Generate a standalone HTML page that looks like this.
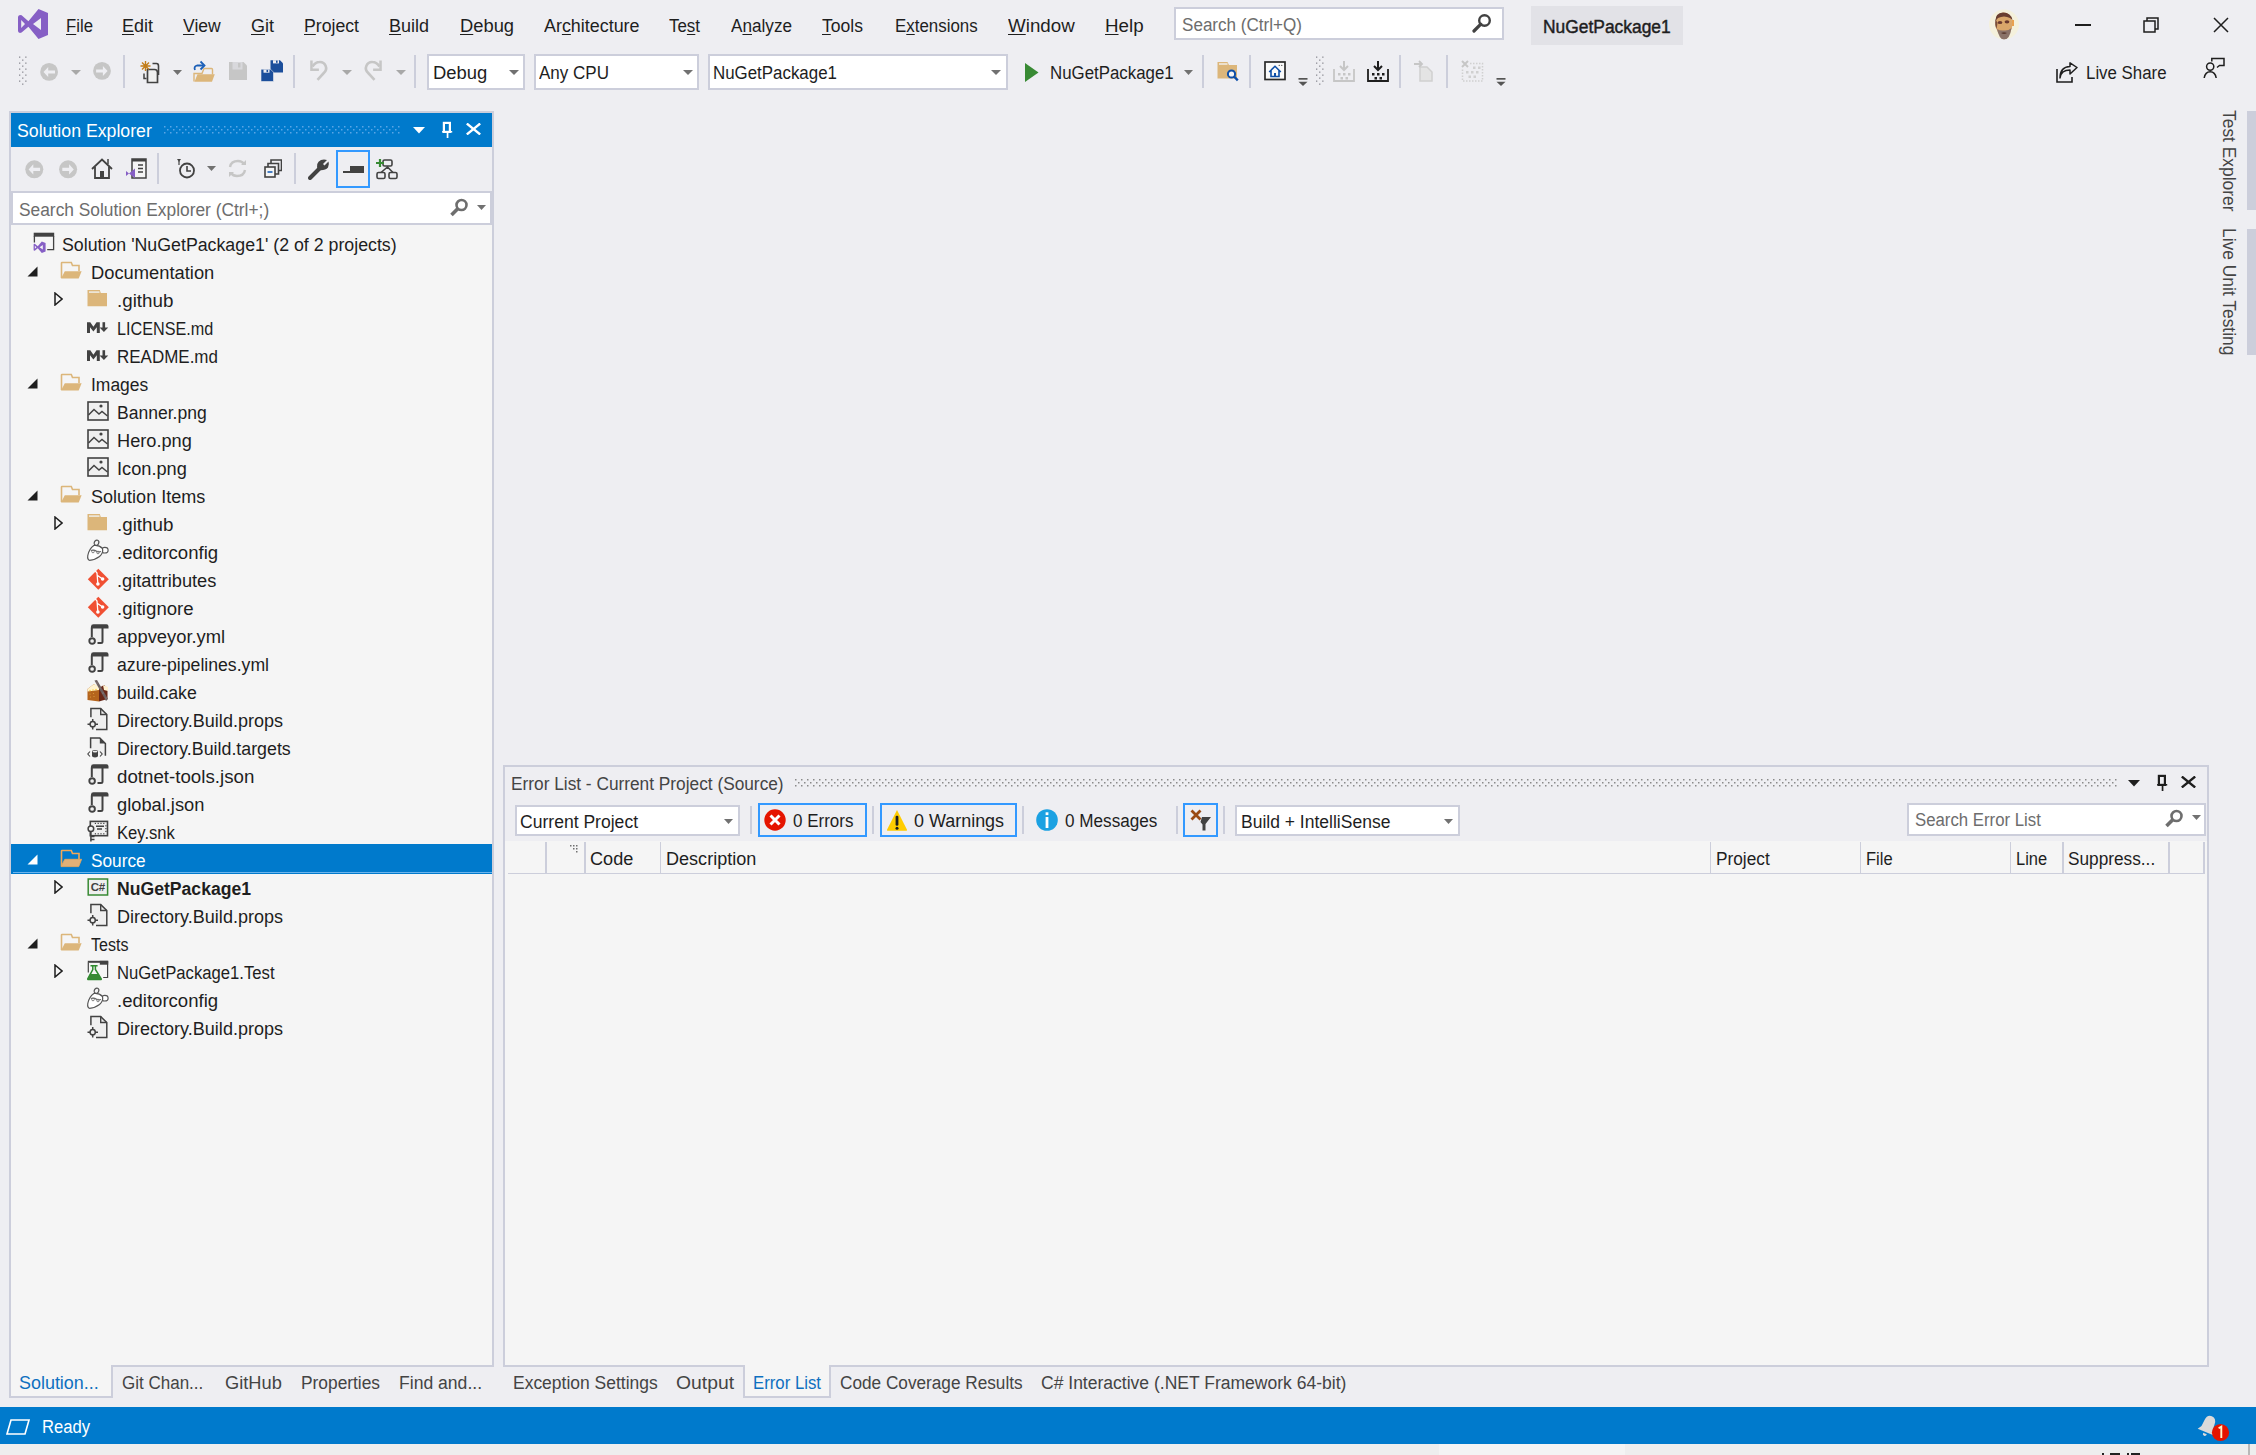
<!DOCTYPE html><html><head><meta charset="utf-8"><style>
html,body{margin:0;padding:0;}
body{width:2256px;height:1455px;overflow:hidden;position:relative;background:#EEEEF2;font-family:"Liberation Sans",sans-serif;font-size:18px;color:#1E1E1E;}
.a{position:absolute;}
.t{position:absolute;white-space:pre;line-height:20px;transform:scaleX(.967);transform-origin:0 0;}
u{text-decoration:underline;text-decoration-thickness:1.3px;text-underline-offset:2px;}
</style></head><body>

<svg class="a" style="left:18px;top:9px;" width="30" height="30" viewBox="0 0 30 30"><path fill="#865FC5" fill-rule="evenodd" d="M0,8 Q0,6.3 2,6 L3.6,6.3 L10.4,12.3 L20.5,0 L30,4 L30,26 L20.5,30 L10.4,17.7 L3.6,23.5 L2,24 Q0,23.7 0,22 Z M3.2,11 L7,15 L3.2,19 Z M23,9 L15,15 L23,21 Z"/></svg>
<div class="t" id="t0" style="left:66px;top:16px;transform:scaleX(0.9286);"><u>F</u>ile</div>
<div class="t" id="t1" style="left:122px;top:16px;transform:scaleX(1.0000);"><u>E</u>dit</div>
<div class="t" id="t2" style="left:183px;top:16px;transform:scaleX(0.9744);"><u>V</u>iew</div>
<div class="t" id="t3" style="left:251px;top:16px;transform:scaleX(1.0000);"><u>G</u>it</div>
<div class="t" id="t4" style="left:304px;top:16px;transform:scaleX(0.9821);"><u>P</u>roject</div>
<div class="t" id="t5" style="left:389px;top:16px;transform:scaleX(1.0000);"><u>B</u>uild</div>
<div class="t" id="t6" style="left:460px;top:16px;transform:scaleX(1.0192);"><u>D</u>ebug</div>
<div class="t" id="t7" style="left:544px;top:16px;transform:scaleX(0.9947);">Ar<u>c</u>hitecture</div>
<div class="t" id="t8" style="left:669px;top:16px;transform:scaleX(0.9394);">Te<u>s</u>t</div>
<div class="t" id="t9" style="left:731px;top:16px;transform:scaleX(0.9524);">A<u>n</u>alyze</div>
<div class="t" id="t10" style="left:822px;top:16px;transform:scaleX(0.9762);"><u>T</u>ools</div>
<div class="t" id="t11" style="left:895px;top:16px;transform:scaleX(0.9386);">E<u>x</u>tensions</div>
<div class="t" id="t12" style="left:1008px;top:16px;transform:scaleX(1.0422);"><u>W</u>indow</div>
<div class="t" id="t13" style="left:1105px;top:16px;transform:scaleX(1.0417);"><u>H</u>elp</div>
<div class="a" style="left:1174px;top:7px;width:330px;height:33px;background:#FFFFFF;box-sizing:border-box;border:2px solid #CCCEDB;"></div>
<div class="t" id="t14" style="left:1182px;top:15px;color:#6D6D6D;transform:scaleX(0.9484);">Search (Ctrl+Q)</div>
<svg class="a" style="left:1472px;top:13px;" width="20" height="20" viewBox="0 0 20 20"><circle cx="12.5" cy="7.5" r="5.3" fill="none" stroke="#424242" stroke-width="2.4"/><path d="M8.8,11.2 L2,18" stroke="#424242" stroke-width="3.2" stroke-linecap="round"/></svg>
<div class="a" style="left:1531px;top:6px;width:152px;height:39px;background:#E2E2E7;"></div>
<div class="t" id="t15" style="left:1543px;top:17px;transform:scaleX(0.9667);-webkit-text-stroke:0.45px #1E1E1E;">NuGetPackage1</div>
<svg class="a" style="left:1989px;top:9px;" width="30" height="31" viewBox="0 0 30 31"><defs><clipPath id="avc"><circle cx="15" cy="15.5" r="15"/></clipPath></defs><g clip-path="url(#avc)"><rect width="30" height="31" fill="#F4F0DC"/><ellipse cx="15" cy="15" rx="8.5" ry="11.5" fill="#D9A66A"/><path d="M6.5,12 Q6,4 14,3.5 Q22,3.5 23.5,11 L21,9 Q15,6 9,9 Z" fill="#6A3E30"/><path d="M6.5,10 Q5.5,16 7.5,20 L8.5,14 Z" fill="#7A4E3A"/><ellipse cx="11" cy="13.5" rx="2.4" ry="1.6" fill="#6A3A2E"/><ellipse cx="18" cy="12.8" rx="2.4" ry="1.6" fill="#6A3A2E"/><path d="M8,20 Q10,30 15,31 Q21,30 22.5,19 Q19,22 15,21.5 Q11,22 8,20 Z" fill="#8A7268"/><path d="M12,24 Q15,22.5 18,24 Q15,26 12,24 Z" fill="#5A3A30"/><rect x="23" y="11" width="2" height="6" fill="#E8A050"/></g></svg>
<div class="a" style="left:2075px;top:24px;width:16px;height:1.5px;background:#1E1E1E;"></div>
<svg class="a" style="left:2143px;top:17px;" width="17" height="16" viewBox="0 0 17 16"><rect x="1" y="4" width="11" height="11" fill="none" stroke="#1E1E1E" stroke-width="1.5"/><path d="M4,4 V1 H15 V12 H12" fill="none" stroke="#1E1E1E" stroke-width="1.5"/></svg>
<svg class="a" style="left:2213px;top:17px;" width="16" height="16" viewBox="0 0 16 16"><path d="M1,1 L15,15 M15,1 L1,15" stroke="#1E1E1E" stroke-width="1.5"/></svg>
<svg class="a" style="left:19px;top:56px;" width="8" height="29" viewBox="0 0 8 29"><g fill="#8C8C94"><rect x="0" y="0.5" width="1.3" height="1.3"/><rect x="6.2" y="0.5" width="1.3" height="1.3"/><rect x="3.1" y="3.5" width="1.3" height="1.3"/><rect x="0" y="6.5" width="1.3" height="1.3"/><rect x="6.2" y="6.5" width="1.3" height="1.3"/><rect x="3.1" y="9.5" width="1.3" height="1.3"/><rect x="0" y="12.5" width="1.3" height="1.3"/><rect x="6.2" y="12.5" width="1.3" height="1.3"/><rect x="3.1" y="15.5" width="1.3" height="1.3"/><rect x="0" y="18.5" width="1.3" height="1.3"/><rect x="6.2" y="18.5" width="1.3" height="1.3"/><rect x="3.1" y="21.5" width="1.3" height="1.3"/><rect x="0" y="24.5" width="1.3" height="1.3"/><rect x="6.2" y="24.5" width="1.3" height="1.3"/><rect x="3.1" y="27.5" width="1.3" height="1.3"/></g></svg>
<svg class="a" style="left:40px;top:62px;" width="19" height="19" viewBox="0 0 19 19"><circle cx="9.1" cy="9.9" r="8.9" fill="#C6C6C6"/><path d="M3.5,10 L8.2,4.9 V8.4 H15 V11.6 H8.2 V15.1 Z" fill="#EEEEF2"/></svg>
<svg class="a" style="left:71px;top:70px;" width="10" height="5" viewBox="0 0 10 5"><path d="M0,0 H10 L5.0,5 Z" fill="#A8A8A8"/></svg>
<svg class="a" style="left:93px;top:61px;" width="19" height="19" viewBox="0 0 19 19"><circle cx="9" cy="9.9" r="8.9" fill="#C6C6C6"/><path d="M14.6,10 L9.9,4.9 V8.4 H3.1 V11.6 H9.9 V15.1 Z" fill="#EEEEF2"/></svg>
<div class="a" style="left:123px;top:55px;width:2px;height:33px;background:#CCCEDB;"></div>
<svg class="a" style="left:139px;top:60px;" width="22" height="24" viewBox="0 0 22 24"><path d="M13.5,3.5 H17.5 Q19.5,3.5 19.5,6 V15" fill="none" stroke="#424242" stroke-width="1.6"/><path d="M8.5,9.5 H15.5 Q18.5,9.5 18.5,12.5 V22.5 H8.5 Z" fill="#F0F0F0" stroke="#424242" stroke-width="1.7"/><path d="M5,13.5 V18.5 H7.5" fill="none" stroke="#424242" stroke-width="1.5"/><path d="M6.5,1 V11 M1.5,6 H11.5 M3,2.5 L10,9.5 M10,2.5 L3,9.5" stroke="#C27D1A" stroke-width="1.4"/><circle cx="6.5" cy="6" r="1.6" fill="#C27D1A"/></svg>
<svg class="a" style="left:173px;top:70px;" width="9" height="5" viewBox="0 0 9 5"><path d="M0,0 H9 L4.5,5 Z" fill="#717171"/></svg>
<svg class="a" style="left:193px;top:60px;" width="22" height="23" viewBox="0 0 22 23"><path d="M1,21.5 V13.5 H9 L11,8.5 H18.5 Q19.5,8.5 19.5,9.5 V14.5" fill="none" stroke="#DCB67A" stroke-width="1.4"/><path d="M1.5,21.8 L4.5,14.2 H21.8 L19,21.8 Z" fill="#DCB67A"/><path d="M2,10 Q0.5,6.5 4,5.5 L10,5.5" fill="none" stroke="#1B5FB7" stroke-width="1.8"/><path d="M7.5,1.5 L11.5,5.5 L7.5,9.5" fill="none" stroke="#1B5FB7" stroke-width="1.8"/></svg>
<svg class="a" style="left:228px;top:61px;" width="20" height="20" viewBox="0 0 20 20"><path d="M1,1 H15.5 L19,4.5 V19 H1 Z" fill="#C6C6C6"/><rect x="4.5" y="1" width="10" height="7.5" fill="#D8D8DC"/><rect x="10" y="2" width="2.5" height="4.5" fill="#C6C6C6"/></svg>
<svg class="a" style="left:260px;top:59px;" width="24" height="24" viewBox="0 0 24 24"><path d="M10.5,1.2 H20 L23,4.2 V13.5 H10.5 Z" fill="#1B4E9B"/><rect x="13" y="1.2" width="6" height="3.2" fill="#EEEEF2"/><rect x="16" y="1.6" width="1.6" height="2.2" fill="#1B4E9B"/><path d="M1,10.2 H10.5 L13.5,13.2 V22.5 H1 Z" fill="#1B4E9B" stroke="#EEEEF2" stroke-width="0.6"/><rect x="3.5" y="10.5" width="6" height="3.2" fill="#EEEEF2"/><rect x="6.5" y="10.9" width="1.6" height="2.2" fill="#1B4E9B"/></svg>
<div class="a" style="left:293px;top:55px;width:2px;height:33px;background:#CCCEDB;"></div>
<svg class="a" style="left:308px;top:59px;" width="22" height="23" viewBox="0 0 22 23"><path d="M3.45,1.4 V10.7 H10.9" fill="none" stroke="#C6C6C6" stroke-width="2.5"/><path d="M4.5,7.5 Q7.5,3 11.5,3 A6.2,6.2 0 0 1 16,13.8 L9.5,20.8" fill="none" stroke="#C6C6C6" stroke-width="2.6"/></svg>
<svg class="a" style="left:342px;top:70px;" width="10" height="5" viewBox="0 0 10 5"><path d="M0,0 H10 L5.0,5 Z" fill="#A8A8A8"/></svg>
<svg class="a" style="left:363px;top:59px;" width="22" height="23" viewBox="0 0 22 23"><path d="M17.55,1.4 V10.7 H10.1" fill="none" stroke="#C6C6C6" stroke-width="2.5"/><path d="M16.5,7.5 Q13.5,3 9.5,3 A6.2,6.2 0 0 0 5,13.8 L11.5,20.8" fill="none" stroke="#C6C6C6" stroke-width="2.6"/></svg>
<svg class="a" style="left:396px;top:70px;" width="10" height="5" viewBox="0 0 10 5"><path d="M0,0 H10 L5.0,5 Z" fill="#A8A8A8"/></svg>
<div class="a" style="left:414px;top:55px;width:2px;height:33px;background:#CCCEDB;"></div>
<div class="a" style="left:427px;top:54px;width:98px;height:36px;background:#FFFFFF;box-sizing:border-box;border:2px solid #CCCEDB;"></div>
<div class="t" id="t16" style="left:433px;top:63px;transform:scaleX(1.0231);">Debug</div>
<svg class="a" style="left:508.5px;top:70px;" width="10" height="5" viewBox="0 0 10 5"><path d="M0,0 H10 L5.0,5 Z" fill="#717171"/></svg>
<div class="a" style="left:534px;top:54px;width:165px;height:36px;background:#FFFFFF;box-sizing:border-box;border:2px solid #CCCEDB;"></div>
<div class="t" id="t17" style="left:539px;top:63px;transform:scaleX(0.9452);">Any CPU</div>
<svg class="a" style="left:682.5px;top:70px;" width="10" height="5" viewBox="0 0 10 5"><path d="M0,0 H10 L5.0,5 Z" fill="#717171"/></svg>
<div class="a" style="left:708px;top:54px;width:300px;height:36px;background:#FFFFFF;box-sizing:border-box;border:2px solid #CCCEDB;"></div>
<div class="t" id="t18" style="left:713px;top:63px;transform:scaleX(0.9382);">NuGetPackage1</div>
<svg class="a" style="left:991px;top:70px;" width="10" height="5" viewBox="0 0 10 5"><path d="M0,0 H10 L5.0,5 Z" fill="#717171"/></svg>
<svg class="a" style="left:1025px;top:63px;" width="14" height="19" viewBox="0 0 14 19"><path d="M0,0 L13.5,9.5 L0,19 Z" fill="#388A34"/></svg>
<div class="t" id="t19" style="left:1050px;top:63px;transform:scaleX(0.9359);">NuGetPackage1</div>
<svg class="a" style="left:1184px;top:70px;" width="9" height="5" viewBox="0 0 9 5"><path d="M0,0 H9 L4.5,5 Z" fill="#717171"/></svg>
<div class="a" style="left:1202px;top:55px;width:2px;height:33px;background:#CCCEDB;"></div>
<svg class="a" style="left:1216px;top:61px;" width="24" height="21" viewBox="0 0 24 21"><path d="M1.5,1 H11.5 L13,4 H21 V17.5 H1.5 Z" fill="#DCB67A"/><rect x="3" y="2.2" width="8.5" height="1.6" fill="#F0EAE0"/><circle cx="15.5" cy="13" r="3.6" fill="#F5F5F5" stroke="#0E4FA8" stroke-width="2"/><path d="M18,15.5 L21.8,19.3" stroke="#0E4FA8" stroke-width="2.4"/></svg>
<div class="a" style="left:1249px;top:55px;width:2px;height:33px;background:#CCCEDB;"></div>
<svg class="a" style="left:1264px;top:61px;" width="22" height="20" viewBox="0 0 22 20"><rect x="1" y="1" width="20" height="17.5" fill="#FAFAFA" stroke="#2A2A2A" stroke-width="1.7"/><path d="M5.2,11 L11,5.3 L16.8,11 M7,9.5 V15.5 H15 V9.5" fill="none" stroke="#0E4FA8" stroke-width="1.6"/><rect x="10" y="12" width="2" height="3.5" fill="#0E4FA8"/><circle cx="15.2" cy="4.3" r="0.6" fill="#2A2A2A"/><circle cx="17.8" cy="4.3" r="0.6" fill="#2A2A2A"/></svg>
<svg class="a" style="left:1298px;top:78px;" width="10" height="9" viewBox="0 0 10 9"><rect x="0.5" y="0" width="9" height="1.7" fill="#555"/><path d="M0.5,3.8 H9.5 L5,8 Z" fill="#555"/></svg>
<svg class="a" style="left:1316px;top:56px;" width="8" height="29" viewBox="0 0 8 29"><g fill="#8C8C94"><rect x="0" y="0.5" width="1.3" height="1.3"/><rect x="6.2" y="0.5" width="1.3" height="1.3"/><rect x="3.1" y="3.5" width="1.3" height="1.3"/><rect x="0" y="6.5" width="1.3" height="1.3"/><rect x="6.2" y="6.5" width="1.3" height="1.3"/><rect x="3.1" y="9.5" width="1.3" height="1.3"/><rect x="0" y="12.5" width="1.3" height="1.3"/><rect x="6.2" y="12.5" width="1.3" height="1.3"/><rect x="3.1" y="15.5" width="1.3" height="1.3"/><rect x="0" y="18.5" width="1.3" height="1.3"/><rect x="6.2" y="18.5" width="1.3" height="1.3"/><rect x="3.1" y="21.5" width="1.3" height="1.3"/><rect x="0" y="24.5" width="1.3" height="1.3"/><rect x="6.2" y="24.5" width="1.3" height="1.3"/><rect x="3.1" y="27.5" width="1.3" height="1.3"/></g></svg>
<svg class="a" style="left:1333px;top:60px;" width="22" height="22" viewBox="0 0 22 22"><path d="M11,1 V10 M7,6 L11,10 L15,6" fill="none" stroke="#C6C6C6" stroke-width="2"/><path d="M1,9 V21 H21 V9" fill="none" stroke="#C6C6C6" stroke-width="1.8"/><rect x="5" y="13" width="2.5" height="2.5" fill="#C6C6C6"/><rect x="10" y="13" width="2.5" height="2.5" fill="#C6C6C6"/><rect x="15" y="13" width="2.5" height="2.5" fill="#C6C6C6"/><rect x="7.5" y="17" width="2.5" height="2.5" fill="#C6C6C6"/><rect x="12.5" y="17" width="2.5" height="2.5" fill="#C6C6C6"/></svg>
<svg class="a" style="left:1367px;top:60px;" width="22" height="22" viewBox="0 0 22 22"><path d="M11,1 V10 M7,6 L11,10 L15,6" fill="none" stroke="#1E1E1E" stroke-width="2"/><path d="M1,9 V21 H21 V9" fill="none" stroke="#1E1E1E" stroke-width="1.8"/><rect x="5" y="13" width="2.5" height="2.5" fill="#1E1E1E"/><rect x="10" y="13" width="2.5" height="2.5" fill="#1E1E1E"/><rect x="15" y="13" width="2.5" height="2.5" fill="#1E1E1E"/><rect x="7.5" y="17" width="2.5" height="2.5" fill="#1E1E1E"/><rect x="12.5" y="17" width="2.5" height="2.5" fill="#1E1E1E"/></svg>
<div class="a" style="left:1399px;top:55px;width:2px;height:33px;background:#CCCEDB;"></div>
<svg class="a" style="left:1413px;top:60px;" width="21" height="22" viewBox="0 0 21 22"><path d="M7,7 H14 L19,12 V21 H7 Z" fill="#E4E4E4" stroke="#D0D0D0" stroke-width="1.5"/><path d="M1,4 H9 M6,1 L9,4 L6,7" fill="none" stroke="#C6C6C6" stroke-width="1.8"/></svg>
<div class="a" style="left:1446px;top:55px;width:2px;height:33px;background:#CCCEDB;"></div>
<svg class="a" style="left:1461px;top:60px;" width="23" height="22" viewBox="0 0 23 22"><path d="M1,1 L7,7 M7,1 L1,7" stroke="#C6C6C6" stroke-width="2"/><path d="M9,3.5 H21.5 V21 H1.5 V9.5" fill="none" stroke="#D0D0D0" stroke-width="1.5" stroke-dasharray="1.5 1.5"/><g fill="#D0D0D0"><rect x="5" y="11" width="2.5" height="2.5"/><rect x="10" y="11" width="2.5" height="2.5"/><rect x="15" y="11" width="2.5" height="2.5"/><rect x="7.5" y="15.5" width="2.5" height="2.5"/><rect x="12.5" y="15.5" width="2.5" height="2.5"/><rect x="12" y="6.5" width="2.5" height="2.5"/><rect x="17" y="6.5" width="2.5" height="2.5"/></g></svg>
<svg class="a" style="left:1496px;top:78px;" width="10" height="9" viewBox="0 0 10 9"><rect x="0.5" y="0" width="9" height="1.7" fill="#555"/><path d="M0.5,3.8 H9.5 L5,8 Z" fill="#555"/></svg>
<svg class="a" style="left:2056px;top:62px;" width="22" height="21" viewBox="0 0 22 21"><path d="M1,7 V20 H16 V15" fill="none" stroke="#1E1E1E" stroke-width="1.6"/><path d="M4,16 Q5,8 14,8 V12 L21,5.5 L14,0.8 V4.5 Q4,5 4,16 Z" fill="none" stroke="#1E1E1E" stroke-width="1.5" stroke-linejoin="round"/></svg>
<div class="t" id="t20" style="left:2086px;top:63px;color:#1E1E1E;transform:scaleX(0.9365);">Live Share</div>
<svg class="a" style="left:2203px;top:57px;" width="22" height="22" viewBox="0 0 22 22"><circle cx="7.2" cy="9.6" r="3.6" fill="none" stroke="#1E1E1E" stroke-width="1.5"/><path d="M1.2,21 Q2.2,14.8 7.2,14.8 Q12.2,14.8 13.2,21" fill="none" stroke="#1E1E1E" stroke-width="1.5"/><path d="M8.8,4.5 V1.5 H21 V8.5 H16.5 L14,10.5" fill="none" stroke="#1E1E1E" stroke-width="1.5"/></svg>
<div class="a" style="left:9px;top:111px;width:485px;height:1256px;background:#F5F5F5;box-sizing:border-box;border:2px solid #CCCEDB;"></div>
<div class="a" style="left:11px;top:113px;width:481px;height:34px;background:#007ACC;"></div>
<div class="t" id="t21" style="left:17px;top:121px;color:#FFFFFF;transform:scaleX(0.9839);">Solution Explorer</div>
<svg class="a" style="left:163.8px;top:126.3px;" width="237" height="8" viewBox="0 0 237 8"><g fill="#5AA6E6"><rect x="0" y="0" width="1.5" height="1.5"/><rect x="0" y="6" width="1.5" height="1.5"/><rect x="3" y="3" width="1.5" height="1.5"/><rect x="6" y="0" width="1.5" height="1.5"/><rect x="6" y="6" width="1.5" height="1.5"/><rect x="9" y="3" width="1.5" height="1.5"/><rect x="12" y="0" width="1.5" height="1.5"/><rect x="12" y="6" width="1.5" height="1.5"/><rect x="15" y="3" width="1.5" height="1.5"/><rect x="18" y="0" width="1.5" height="1.5"/><rect x="18" y="6" width="1.5" height="1.5"/><rect x="21" y="3" width="1.5" height="1.5"/><rect x="24" y="0" width="1.5" height="1.5"/><rect x="24" y="6" width="1.5" height="1.5"/><rect x="27" y="3" width="1.5" height="1.5"/><rect x="30" y="0" width="1.5" height="1.5"/><rect x="30" y="6" width="1.5" height="1.5"/><rect x="33" y="3" width="1.5" height="1.5"/><rect x="36" y="0" width="1.5" height="1.5"/><rect x="36" y="6" width="1.5" height="1.5"/><rect x="39" y="3" width="1.5" height="1.5"/><rect x="42" y="0" width="1.5" height="1.5"/><rect x="42" y="6" width="1.5" height="1.5"/><rect x="45" y="3" width="1.5" height="1.5"/><rect x="48" y="0" width="1.5" height="1.5"/><rect x="48" y="6" width="1.5" height="1.5"/><rect x="51" y="3" width="1.5" height="1.5"/><rect x="54" y="0" width="1.5" height="1.5"/><rect x="54" y="6" width="1.5" height="1.5"/><rect x="57" y="3" width="1.5" height="1.5"/><rect x="60" y="0" width="1.5" height="1.5"/><rect x="60" y="6" width="1.5" height="1.5"/><rect x="63" y="3" width="1.5" height="1.5"/><rect x="66" y="0" width="1.5" height="1.5"/><rect x="66" y="6" width="1.5" height="1.5"/><rect x="69" y="3" width="1.5" height="1.5"/><rect x="72" y="0" width="1.5" height="1.5"/><rect x="72" y="6" width="1.5" height="1.5"/><rect x="75" y="3" width="1.5" height="1.5"/><rect x="78" y="0" width="1.5" height="1.5"/><rect x="78" y="6" width="1.5" height="1.5"/><rect x="81" y="3" width="1.5" height="1.5"/><rect x="84" y="0" width="1.5" height="1.5"/><rect x="84" y="6" width="1.5" height="1.5"/><rect x="87" y="3" width="1.5" height="1.5"/><rect x="90" y="0" width="1.5" height="1.5"/><rect x="90" y="6" width="1.5" height="1.5"/><rect x="93" y="3" width="1.5" height="1.5"/><rect x="96" y="0" width="1.5" height="1.5"/><rect x="96" y="6" width="1.5" height="1.5"/><rect x="99" y="3" width="1.5" height="1.5"/><rect x="102" y="0" width="1.5" height="1.5"/><rect x="102" y="6" width="1.5" height="1.5"/><rect x="105" y="3" width="1.5" height="1.5"/><rect x="108" y="0" width="1.5" height="1.5"/><rect x="108" y="6" width="1.5" height="1.5"/><rect x="111" y="3" width="1.5" height="1.5"/><rect x="114" y="0" width="1.5" height="1.5"/><rect x="114" y="6" width="1.5" height="1.5"/><rect x="117" y="3" width="1.5" height="1.5"/><rect x="120" y="0" width="1.5" height="1.5"/><rect x="120" y="6" width="1.5" height="1.5"/><rect x="123" y="3" width="1.5" height="1.5"/><rect x="126" y="0" width="1.5" height="1.5"/><rect x="126" y="6" width="1.5" height="1.5"/><rect x="129" y="3" width="1.5" height="1.5"/><rect x="132" y="0" width="1.5" height="1.5"/><rect x="132" y="6" width="1.5" height="1.5"/><rect x="135" y="3" width="1.5" height="1.5"/><rect x="138" y="0" width="1.5" height="1.5"/><rect x="138" y="6" width="1.5" height="1.5"/><rect x="141" y="3" width="1.5" height="1.5"/><rect x="144" y="0" width="1.5" height="1.5"/><rect x="144" y="6" width="1.5" height="1.5"/><rect x="147" y="3" width="1.5" height="1.5"/><rect x="150" y="0" width="1.5" height="1.5"/><rect x="150" y="6" width="1.5" height="1.5"/><rect x="153" y="3" width="1.5" height="1.5"/><rect x="156" y="0" width="1.5" height="1.5"/><rect x="156" y="6" width="1.5" height="1.5"/><rect x="159" y="3" width="1.5" height="1.5"/><rect x="162" y="0" width="1.5" height="1.5"/><rect x="162" y="6" width="1.5" height="1.5"/><rect x="165" y="3" width="1.5" height="1.5"/><rect x="168" y="0" width="1.5" height="1.5"/><rect x="168" y="6" width="1.5" height="1.5"/><rect x="171" y="3" width="1.5" height="1.5"/><rect x="174" y="0" width="1.5" height="1.5"/><rect x="174" y="6" width="1.5" height="1.5"/><rect x="177" y="3" width="1.5" height="1.5"/><rect x="180" y="0" width="1.5" height="1.5"/><rect x="180" y="6" width="1.5" height="1.5"/><rect x="183" y="3" width="1.5" height="1.5"/><rect x="186" y="0" width="1.5" height="1.5"/><rect x="186" y="6" width="1.5" height="1.5"/><rect x="189" y="3" width="1.5" height="1.5"/><rect x="192" y="0" width="1.5" height="1.5"/><rect x="192" y="6" width="1.5" height="1.5"/><rect x="195" y="3" width="1.5" height="1.5"/><rect x="198" y="0" width="1.5" height="1.5"/><rect x="198" y="6" width="1.5" height="1.5"/><rect x="201" y="3" width="1.5" height="1.5"/><rect x="204" y="0" width="1.5" height="1.5"/><rect x="204" y="6" width="1.5" height="1.5"/><rect x="207" y="3" width="1.5" height="1.5"/><rect x="210" y="0" width="1.5" height="1.5"/><rect x="210" y="6" width="1.5" height="1.5"/><rect x="213" y="3" width="1.5" height="1.5"/><rect x="216" y="0" width="1.5" height="1.5"/><rect x="216" y="6" width="1.5" height="1.5"/><rect x="219" y="3" width="1.5" height="1.5"/><rect x="222" y="0" width="1.5" height="1.5"/><rect x="222" y="6" width="1.5" height="1.5"/><rect x="225" y="3" width="1.5" height="1.5"/><rect x="228" y="0" width="1.5" height="1.5"/><rect x="228" y="6" width="1.5" height="1.5"/><rect x="231" y="3" width="1.5" height="1.5"/><rect x="234" y="0" width="1.5" height="1.5"/><rect x="234" y="6" width="1.5" height="1.5"/></g></svg>
<svg class="a" style="left:413px;top:127px;" width="12" height="7" viewBox="0 0 12 7"><path d="M0,0 H12 L6,6.5 Z" fill="#FFFFFF"/></svg>
<svg class="a" style="left:442px;top:121px;" width="11" height="18" viewBox="0 0 11 18"><rect x="1.9" y="1.9" width="6" height="9" fill="none" stroke="#FFFFFF" stroke-width="2.2"/><rect x="0.1" y="10" width="10.1" height="1.6" fill="#FFFFFF"/><rect x="4.7" y="11" width="1.7" height="6" fill="#FFFFFF"/></svg>
<svg class="a" style="left:466px;top:123px;" width="15" height="12" viewBox="0 0 15 12"><path d="M0.8,0.5 L14.2,11.5 M14.2,0.5 L0.8,11.5" stroke="#FFFFFF" stroke-width="2.3"/></svg>
<div class="a" style="left:11px;top:147px;width:481px;height:44px;background:#EEEEF2;"></div>
<svg class="a" style="left:25px;top:160px;" width="19" height="19" viewBox="0 0 19 19"><circle cx="9.3" cy="9.3" r="9" fill="#C6C6C6"/><path d="M3.6,9.4 L8.3,4.3 V7.8 H15.1 V11 H8.3 V14.5 Z" fill="#EEEEF2"/></svg>
<svg class="a" style="left:59px;top:160px;" width="19" height="19" viewBox="0 0 19 19"><circle cx="9.1" cy="9.3" r="9" fill="#C6C6C6"/><path d="M14.8,9.4 L10.1,4.3 V7.8 H3.3 V11 H10.1 V14.5 Z" fill="#EEEEF2"/></svg>
<svg class="a" style="left:91px;top:158px;" width="22" height="21" viewBox="0 0 22 21"><path d="M1,11 L11,1.5 L21,11" fill="none" stroke="#424242" stroke-width="1.8"/><path d="M4,9 V20 H18 V9" fill="none" stroke="#424242" stroke-width="1.8"/><rect x="9" y="13" width="4" height="7" fill="#424242"/><path d="M17,1 V6" stroke="#424242" stroke-width="1.5"/></svg>
<svg class="a" style="left:125px;top:158px;" width="22" height="21" viewBox="0 0 22 21"><rect x="7" y="1" width="14" height="19" fill="#F5F5F5" stroke="#424242" stroke-width="1.5"/><rect x="7" y="1" width="14" height="2.5" fill="#424242"/><path d="M13,7 H18 M13,10.5 H18 M13,14 H18" stroke="#424242" stroke-width="1.3"/><path d="M1,13 L4,15.5 L10,10.5 V20 L4,15.5 L1,18 Z" fill="#865FC5"/></svg>
<div class="a" style="left:157px;top:153px;width:2px;height:31px;background:#CCCEDB;"></div>
<svg class="a" style="left:176px;top:158px;" width="20" height="21" viewBox="0 0 20 21"><path d="M1,1 H5 L3,4 Z" fill="#424242"/><path d="M3,3 V7" stroke="#424242" stroke-width="1.2"/><circle cx="11" cy="12.5" r="7" fill="none" stroke="#424242" stroke-width="1.8"/><path d="M11,8 V13 H15" fill="none" stroke="#424242" stroke-width="1.6"/></svg>
<svg class="a" style="left:207px;top:166px;" width="9" height="5" viewBox="0 0 9 5"><path d="M0,0 H9 L4.5,5 Z" fill="#717171"/></svg>
<svg class="a" style="left:227px;top:158px;" width="21" height="21" viewBox="0 0 21 21"><path d="M3,9 Q4,3 11,3 Q15,3 17,6 M18,12 Q17,18 10,18 Q6,18 4,15" fill="none" stroke="#C6C6C6" stroke-width="2.4"/><path d="M14,7 H19 V2 Z M7,14 H2 V19 Z" fill="#C6C6C6"/></svg>
<svg class="a" style="left:264px;top:159px;" width="18" height="19" viewBox="0 0 18 19"><rect x="1" y="8" width="10" height="10" fill="#F5F5F5" stroke="#424242" stroke-width="1.6"/><path d="M4,8 V4.5 H14.5 V15 H11 M7,4.5 V1 H17.5 V11.5 H14.5" fill="none" stroke="#424242" stroke-width="1.6"/><path d="M3.5,13 H8.5" stroke="#1B5FB7" stroke-width="1.6"/></svg>
<div class="a" style="left:294px;top:153px;width:2px;height:31px;background:#CCCEDB;"></div>
<svg class="a" style="left:308px;top:158px;" width="22" height="22" viewBox="0 0 22 22"><path d="M2,20 L11,11" stroke="#424242" stroke-width="4" stroke-linecap="round"/><path d="M10,12 Q7,5 13,2 Q16,1 19,2 L15,6 L16.5,7.5 L20.5,3.5 Q21.5,6 20,9.5 Q17,13 10,12 Z" fill="#424242"/></svg>
<div class="a" style="left:336px;top:150px;width:34px;height:38px;box-sizing:border-box;border:2px solid #3399FF;"></div>
<div class="a" style="left:342.5px;top:170.5px;width:21px;height:2.2px;background:#424242;"></div>
<div class="a" style="left:349.5px;top:165.5px;width:14px;height:7px;background:#424242;"></div>
<svg class="a" style="left:376px;top:158px;" width="22" height="22" viewBox="0 0 22 22"><rect x="7" y="2" width="9" height="6" rx="1.5" fill="none" stroke="#424242" stroke-width="1.6"/><rect x="1" y="14.5" width="8" height="6" rx="1.5" fill="none" stroke="#424242" stroke-width="1.6"/><rect x="13" y="14.5" width="8" height="6" rx="1.5" fill="none" stroke="#424242" stroke-width="1.6"/><path d="M11.5,8 V11 M5,14.5 L11.5,9 L17,14.5" fill="none" stroke="#424242" stroke-width="1.6"/><path d="M4,1 V9 M0,5 H8" stroke="#388A34" stroke-width="2.2"/></svg>
<div class="a" style="left:11px;top:191px;width:481px;height:34px;background:#CCCEDB;"></div>
<div class="a" style="left:13px;top:193px;width:477px;height:30px;background:#FFFFFF;"></div>
<div class="t" id="t22" style="left:19px;top:200px;color:#6D6D6D;transform:scaleX(0.9637);">Search Solution Explorer (Ctrl+;)</div>
<svg class="a" style="left:449px;top:198px;" width="20" height="19" viewBox="0 0 20 19"><circle cx="12.5" cy="7" r="5" fill="none" stroke="#6E6E6E" stroke-width="2.6"/><path d="M9.2,10.3 L2.5,17" stroke="#6E6E6E" stroke-width="3.6"/></svg>
<svg class="a" style="left:476.5px;top:205px;" width="9" height="5" viewBox="0 0 9 5"><path d="M0,0 H9 L4.5,5 Z" fill="#717171"/></svg>
<svg class="a" style="left:32px;top:231px;" width="24" height="24" viewBox="0 0 24 24"><rect x="1.7" y="1.7" width="20.5" height="4" fill="#424242"/><path d="M2.4,5 V11.4 M21.6,5 V18.6 H15.2" fill="none" stroke="#424242" stroke-width="1.3"/><g transform="translate(1.6,10.6) scale(0.4,0.377)"><path fill="#865FC5" fill-rule="evenodd" d="M0,8 Q0,6.3 2,6 L3.6,6.3 L10.4,12.3 L20.5,0 L30,4 L30,26 L20.5,30 L10.4,17.7 L3.6,23.5 L2,24 Q0,23.7 0,22 Z M3.2,11 L7,15 L3.2,19 Z M23,9 L15,15 L23,21 Z"/></g></svg>
<div class="t" id="t23" style="left:62px;top:235px;color:#1E1E1E;transform:scaleX(0.9870);">Solution 'NuGetPackage1' (2 of 2 projects)</div>
<svg class="a" style="left:27px;top:266px;" width="11" height="11" viewBox="0 0 11 11"><path d="M10.5,0.5 V10.5 H0.5 Z" fill="#1E1E1E"/></svg>
<svg class="a" style="left:59px;top:259px;" width="24" height="24" viewBox="0 0 24 24"><path d="M2.5,19 V4 Q2.5,3.5 3,3.5 H12.3 L13.5,6.5 H20 V12" fill="none" stroke="#DCB67A" stroke-width="1.6"/><path d="M2,19.6 L5.8,12.3 H22.6 L19.7,19.6 Z" fill="#DCB67A"/></svg>
<div class="t" id="t24" style="left:91px;top:263px;color:#1E1E1E;transform:scaleX(1.0183);">Documentation</div>
<svg class="a" style="left:54px;top:292px;" width="9" height="14" viewBox="0 0 9 14"><path d="M1,1 L8,7 L1,13 Z" fill="none" stroke="#1E1E1E" stroke-width="1.5"/></svg>
<svg class="a" style="left:86px;top:287px;" width="24" height="24" viewBox="0 0 24 24"><path d="M1.5,3 H13.8 L14.8,6 H21 V19.2 H1.5 Z" fill="#DCB67A"/><rect x="3" y="4.3" width="10.5" height="1.6" fill="#EEEAE0"/></svg>
<div class="t" id="t25" style="left:117px;top:291px;color:#1E1E1E;transform:scaleX(1.0434);">.github</div>
<svg class="a" style="left:86px;top:315px;" width="24" height="24" viewBox="0 0 24 24"><path d="M1,18 V7.2 H4.3 L7.4,11.8 L10.5,7.2 H13.8 V18 H10.8 V12.2 L7.4,16.5 L4,12.2 V18 Z" fill="#424242"/><rect x="16.5" y="7.2" width="2.6" height="6" fill="#424242"/><path d="M13.6,12.6 H22.2 L17.9,17 Z" fill="#424242"/></svg>
<div class="t" id="t26" style="left:117px;top:319px;color:#1E1E1E;transform:scaleX(0.8991);">LICENSE.md</div>
<svg class="a" style="left:86px;top:343px;" width="24" height="24" viewBox="0 0 24 24"><path d="M1,18 V7.2 H4.3 L7.4,11.8 L10.5,7.2 H13.8 V18 H10.8 V12.2 L7.4,16.5 L4,12.2 V18 Z" fill="#424242"/><rect x="16.5" y="7.2" width="2.6" height="6" fill="#424242"/><path d="M13.6,12.6 H22.2 L17.9,17 Z" fill="#424242"/></svg>
<div class="t" id="t27" style="left:117px;top:347px;color:#1E1E1E;transform:scaleX(0.9434);">README.md</div>
<svg class="a" style="left:27px;top:378px;" width="11" height="11" viewBox="0 0 11 11"><path d="M10.5,0.5 V10.5 H0.5 Z" fill="#1E1E1E"/></svg>
<svg class="a" style="left:59px;top:371px;" width="24" height="24" viewBox="0 0 24 24"><path d="M2.5,19 V4 Q2.5,3.5 3,3.5 H12.3 L13.5,6.5 H20 V12" fill="none" stroke="#DCB67A" stroke-width="1.6"/><path d="M2,19.6 L5.8,12.3 H22.6 L19.7,19.6 Z" fill="#DCB67A"/></svg>
<div class="t" id="t28" style="left:91px;top:375px;color:#1E1E1E;transform:scaleX(0.9695);">Images</div>
<svg class="a" style="left:86px;top:399px;" width="24" height="24" viewBox="0 0 24 24"><rect x="2" y="3" width="20" height="18" fill="#EFEFEF" stroke="#424242" stroke-width="1.6"/><path d="M2.5,16 L8,10.5 L13,15 L16,12.5 L21.5,17" fill="none" stroke="#424242" stroke-width="1.5"/><circle cx="15" cy="7" r="1.6" fill="#424242"/></svg>
<div class="t" id="t29" style="left:117px;top:403px;color:#1E1E1E;transform:scaleX(0.9747);">Banner.png</div>
<svg class="a" style="left:86px;top:427px;" width="24" height="24" viewBox="0 0 24 24"><rect x="2" y="3" width="20" height="18" fill="#EFEFEF" stroke="#424242" stroke-width="1.6"/><path d="M2.5,16 L8,10.5 L13,15 L16,12.5 L21.5,17" fill="none" stroke="#424242" stroke-width="1.5"/><circle cx="15" cy="7" r="1.6" fill="#424242"/></svg>
<div class="t" id="t30" style="left:117px;top:431px;color:#1E1E1E;transform:scaleX(1.0110);">Hero.png</div>
<svg class="a" style="left:86px;top:455px;" width="24" height="24" viewBox="0 0 24 24"><rect x="2" y="3" width="20" height="18" fill="#EFEFEF" stroke="#424242" stroke-width="1.6"/><path d="M2.5,16 L8,10.5 L13,15 L16,12.5 L21.5,17" fill="none" stroke="#424242" stroke-width="1.5"/><circle cx="15" cy="7" r="1.6" fill="#424242"/></svg>
<div class="t" id="t31" style="left:117px;top:459px;color:#1E1E1E;transform:scaleX(1.0118);">Icon.png</div>
<svg class="a" style="left:27px;top:490px;" width="11" height="11" viewBox="0 0 11 11"><path d="M10.5,0.5 V10.5 H0.5 Z" fill="#1E1E1E"/></svg>
<svg class="a" style="left:59px;top:483px;" width="24" height="24" viewBox="0 0 24 24"><path d="M2.5,19 V4 Q2.5,3.5 3,3.5 H12.3 L13.5,6.5 H20 V12" fill="none" stroke="#DCB67A" stroke-width="1.6"/><path d="M2,19.6 L5.8,12.3 H22.6 L19.7,19.6 Z" fill="#DCB67A"/></svg>
<div class="t" id="t32" style="left:91px;top:487px;color:#1E1E1E;transform:scaleX(1.0018);">Solution Items</div>
<svg class="a" style="left:54px;top:516px;" width="9" height="14" viewBox="0 0 9 14"><path d="M1,1 L8,7 L1,13 Z" fill="none" stroke="#1E1E1E" stroke-width="1.5"/></svg>
<svg class="a" style="left:86px;top:511px;" width="24" height="24" viewBox="0 0 24 24"><path d="M1.5,3 H13.8 L14.8,6 H21 V19.2 H1.5 Z" fill="#DCB67A"/><rect x="3" y="4.3" width="10.5" height="1.6" fill="#EEEAE0"/></svg>
<div class="t" id="t33" style="left:117px;top:515px;color:#1E1E1E;transform:scaleX(1.0434);">.github</div>
<svg class="a" style="left:86px;top:539px;" width="24" height="24" viewBox="0 0 24 24"><ellipse cx="10.5" cy="3.8" rx="2.2" ry="2.8" transform="rotate(25 10.5 3.8)" fill="#F5F5F5" stroke="#555" stroke-width="1.2"/><ellipse cx="18.8" cy="11.2" rx="3.3" ry="2.8" fill="#FFFFFF" stroke="#555" stroke-width="1.2"/><path d="M7.8,6.5 Q13,5.8 16.5,9.5 Q17.5,14 13.5,17.5 Q9,21 3.5,21.3 Q1.2,20.5 1.8,16.5 Q3,10 7.8,6.5 Z" fill="#FFFFFF" stroke="#555" stroke-width="1.2"/><path d="M4.8,11.5 Q8,10.5 10.5,12.3 Q12,13.5 15,12.5" fill="none" stroke="#666" stroke-width="1.3"/><circle cx="7" cy="12.5" r="1.3" fill="none" stroke="#777" stroke-width="0.9"/><circle cx="12" cy="13.5" r="1.3" fill="none" stroke="#777" stroke-width="0.9"/></svg>
<div class="t" id="t34" style="left:117px;top:543px;color:#1E1E1E;transform:scaleX(1.0309);">.editorconfig</div>
<svg class="a" style="left:86px;top:567px;" width="24" height="24" viewBox="0 0 24 24"><path d="M12.3,1.7 L22.8,12.2 L12.3,22.7 L1.8,12.2 Z" fill="#F05033"/><path d="M9.3,3.9 L11,6 L11.9,17 M10.8,8 L16.6,12" fill="none" stroke="#FFFFFF" stroke-width="1.3"/><circle cx="11.9" cy="17" r="1.8" fill="#FFFFFF"/><circle cx="16.6" cy="12" r="1.8" fill="#FFFFFF"/></svg>
<div class="t" id="t35" style="left:117px;top:571px;color:#1E1E1E;transform:scaleX(1.0133);">.gitattributes</div>
<svg class="a" style="left:86px;top:595px;" width="24" height="24" viewBox="0 0 24 24"><path d="M12.3,1.7 L22.8,12.2 L12.3,22.7 L1.8,12.2 Z" fill="#F05033"/><path d="M9.3,3.9 L11,6 L11.9,17 M10.8,8 L16.6,12" fill="none" stroke="#FFFFFF" stroke-width="1.3"/><circle cx="11.9" cy="17" r="1.8" fill="#FFFFFF"/><circle cx="16.6" cy="12" r="1.8" fill="#FFFFFF"/></svg>
<div class="t" id="t36" style="left:117px;top:599px;color:#1E1E1E;transform:scaleX(1.0356);">.gitignore</div>
<svg class="a" style="left:86px;top:623px;" width="24" height="24" viewBox="0 0 24 24"><path d="M5.8,14 V5 Q5.8,3.5 7.5,3.5 H16.5 V18.5 Q16.5,20 15,20 H11.5" fill="#EFEFEF" stroke="#424242" stroke-width="2"/><path d="M5,5.6 V3.5 Q5,1.3 7.5,1.3 H20.5 Q22.5,1.3 22.5,3.5 V5.6 Z" fill="#424242"/><circle cx="6.1" cy="18" r="2.8" fill="#EFEFEF" stroke="#424242" stroke-width="1.9"/></svg>
<div class="t" id="t37" style="left:117px;top:627px;color:#1E1E1E;transform:scaleX(1.0200);">appveyor.yml</div>
<svg class="a" style="left:86px;top:651px;" width="24" height="24" viewBox="0 0 24 24"><path d="M5.8,14 V5 Q5.8,3.5 7.5,3.5 H16.5 V18.5 Q16.5,20 15,20 H11.5" fill="#EFEFEF" stroke="#424242" stroke-width="2"/><path d="M5,5.6 V3.5 Q5,1.3 7.5,1.3 H20.5 Q22.5,1.3 22.5,3.5 V5.6 Z" fill="#424242"/><circle cx="6.1" cy="18" r="2.8" fill="#EFEFEF" stroke="#424242" stroke-width="1.9"/></svg>
<div class="t" id="t38" style="left:117px;top:655px;color:#1E1E1E;transform:scaleX(0.9805);">azure-pipelines.yml</div>
<svg class="a" style="left:86px;top:679px;" width="24" height="24" viewBox="0 0 24 24"><path d="M1.5,10 L8,5 L13,9 V22.5 L1.5,21 Z" fill="#B5651D"/><path d="M1.5,10 L8,5 L13,8 L13,11 L1.5,12.5 Z" fill="#FFF2D0"/><g fill="#FFD040"><circle cx="4" cy="11.5" r="0.8"/><circle cx="7" cy="11" r="0.8"/><circle cx="10" cy="10.5" r="0.8"/></g><g fill="#E0A040"><circle cx="4" cy="15" r="0.6"/><circle cx="7.5" cy="14.5" r="0.6"/><circle cx="4.5" cy="18" r="0.6"/><circle cx="8" cy="17.5" r="0.6"/></g><path d="M13,9 L18,6 L21.5,9 V20 L13,22.5 Z" fill="#6A2818"/><path d="M17,6 L22,8 V12 L18,11 Z" fill="#FFF2D0"/><path d="M8.5,1.5 L11,1 L22,20 L20,22 Z" fill="#6E6060"/><g fill="#A09090"><circle cx="11" cy="4" r="0.6"/><circle cx="14" cy="9" r="0.6"/><circle cx="17" cy="14" r="0.6"/><circle cx="20" cy="19" r="0.6"/></g></svg>
<div class="t" id="t39" style="left:117px;top:683px;color:#1E1E1E;transform:scaleX(0.9837);">build.cake</div>
<svg class="a" style="left:86px;top:707px;" width="24" height="24" viewBox="0 0 24 24"><path d="M4.9,10.3 V1.6 H14.7 L20.8,7.5 V22.4 H10" fill="#EFEFEF" stroke="#424242" stroke-width="1.5"/><path d="M14.7,1.6 V7.5 H20.8" fill="none" stroke="#424242" stroke-width="1.4"/><circle cx="6.7" cy="17.2" r="2.6" fill="#EFEFEF" stroke="#424242" stroke-width="1.5"/><path d="M6.7,12 V14.5 M6.7,20 V22.5 M1.5,17.2 H4 M9.5,17.2 H12" stroke="#424242" stroke-width="1.5"/></svg>
<div class="t" id="t40" style="left:117px;top:711px;color:#1E1E1E;transform:scaleX(1.0018);">Directory.Build.props</div>
<svg class="a" style="left:86px;top:735px;" width="24" height="24" viewBox="0 0 24 24"><path d="M4.6,13.2 V3 H13.8 L19.4,8.5 V20.7" fill="#EFEFEF" stroke="#424242" stroke-width="1.5"/><path d="M13.8,3 V8.5 H19.4 Z" fill="#424242"/><path d="M4,16.5 L1.8,19 L4,21.5 M14,16.5 L16.2,19 L14,21.5" fill="none" stroke="#424242" stroke-width="1.1"/><path d="M6,16.5 Q6,15 9,15 Q12,15 12,16.5 V21 Q12,22.4 9,22.4 Q6,22.4 6,21 Z" fill="#424242"/><ellipse cx="9" cy="16.6" rx="2.5" ry="0.9" fill="#EFEFEF"/></svg>
<div class="t" id="t41" style="left:117px;top:739px;color:#1E1E1E;transform:scaleX(0.9886);">Directory.Build.targets</div>
<svg class="a" style="left:86px;top:763px;" width="24" height="24" viewBox="0 0 24 24"><path d="M5.8,14 V5 Q5.8,3.5 7.5,3.5 H16.5 V18.5 Q16.5,20 15,20 H11.5" fill="#EFEFEF" stroke="#424242" stroke-width="2"/><path d="M5,5.6 V3.5 Q5,1.3 7.5,1.3 H20.5 Q22.5,1.3 22.5,3.5 V5.6 Z" fill="#424242"/><circle cx="6.1" cy="18" r="2.8" fill="#EFEFEF" stroke="#424242" stroke-width="1.9"/></svg>
<div class="t" id="t42" style="left:117px;top:767px;color:#1E1E1E;transform:scaleX(1.0397);">dotnet-tools.json</div>
<svg class="a" style="left:86px;top:791px;" width="24" height="24" viewBox="0 0 24 24"><path d="M5.8,14 V5 Q5.8,3.5 7.5,3.5 H16.5 V18.5 Q16.5,20 15,20 H11.5" fill="#EFEFEF" stroke="#424242" stroke-width="2"/><path d="M5,5.6 V3.5 Q5,1.3 7.5,1.3 H20.5 Q22.5,1.3 22.5,3.5 V5.6 Z" fill="#424242"/><circle cx="6.1" cy="18" r="2.8" fill="#EFEFEF" stroke="#424242" stroke-width="1.9"/></svg>
<div class="t" id="t43" style="left:117px;top:795px;color:#1E1E1E;transform:scaleX(1.0153);">global.json</div>
<svg class="a" style="left:86px;top:819px;" width="24" height="24" viewBox="0 0 24 24"><rect x="4.3" y="2.4" width="17.2" height="14.3" fill="#EFEFEF" stroke="#424242" stroke-width="1.6"/><rect x="8.8" y="3.8" width="1.2" height="1.2" fill="#424242"/><rect x="8.8" y="14.2" width="1.2" height="1.2" fill="#424242"/><rect x="11.6" y="3.8" width="1.2" height="1.2" fill="#424242"/><rect x="11.6" y="14.2" width="1.2" height="1.2" fill="#424242"/><rect x="14.4" y="3.8" width="1.2" height="1.2" fill="#424242"/><rect x="14.4" y="14.2" width="1.2" height="1.2" fill="#424242"/><rect x="17.2" y="3.8" width="1.2" height="1.2" fill="#424242"/><rect x="17.2" y="14.2" width="1.2" height="1.2" fill="#424242"/><rect x="19.3" y="6.2" width="1.2" height="1.2" fill="#424242"/><rect x="19.3" y="9" width="1.2" height="1.2" fill="#424242"/><rect x="19.3" y="11.8" width="1.2" height="1.2" fill="#424242"/><path d="M10,7.2 H18 M11,10 H16" stroke="#424242" stroke-width="1.4"/><circle cx="4.9" cy="9.7" r="2.8" fill="#F5F5F5" stroke="#424242" stroke-width="1.5"/><path d="M4.9,12.5 V22.5 M4.9,17.5 H8.5 M4.9,20.5 H8.5" stroke="#424242" stroke-width="1.5"/></svg>
<div class="t" id="t44" style="left:117px;top:823px;color:#1E1E1E;transform:scaleX(0.9238);">Key.snk</div>
<div class="a" style="left:11px;top:844px;width:481px;height:30px;background:#007ACC;"></div>
<div class="a" style="left:12.5px;top:872px;width:479px;height:1px;background:#6CB4EC;"></div>
<svg class="a" style="left:27px;top:854px;" width="11" height="11" viewBox="0 0 11 11"><path d="M10.5,0.5 V10.5 H0.5 Z" fill="#FFFFFF"/></svg>
<svg class="a" style="left:59px;top:847px;" width="24" height="24" viewBox="0 0 24 24"><path d="M2.5,19 V4 Q2.5,3.5 3,3.5 H12.3 L13.5,6.5 H20 V12" fill="none" stroke="#F0A857" stroke-width="1.6"/><path d="M2,19.6 L5.8,12.3 H22.6 L19.7,19.6 Z" fill="#E0B078" stroke="#F0A857" stroke-width="0.8"/></svg>
<div class="t" id="t45" style="left:91px;top:851px;color:#FFFFFF;transform:scaleX(0.9589);">Source</div>
<svg class="a" style="left:54px;top:880px;" width="9" height="14" viewBox="0 0 9 14"><path d="M1,1 L8,7 L1,13 Z" fill="none" stroke="#1E1E1E" stroke-width="1.5"/></svg>
<svg class="a" style="left:86px;top:875px;" width="24" height="24" viewBox="0 0 24 24"><rect x="2.2" y="4" width="19.4" height="16" fill="#EFEFEF" stroke="#388A34" stroke-width="1.5"/><text x="11.9" y="16" text-anchor="middle" style="font-family:&quot;Liberation Sans&quot;;font-weight:bold;font-size:11.5px" fill="#424242" letter-spacing="-0.3">C#</text></svg>
<div class="t" id="t46" style="left:117px;top:879px;color:#1E1E1E;transform:scaleX(0.9781);"><b>NuGetPackage1</b></div>
<svg class="a" style="left:86px;top:903px;" width="24" height="24" viewBox="0 0 24 24"><path d="M4.9,10.3 V1.6 H14.7 L20.8,7.5 V22.4 H10" fill="#EFEFEF" stroke="#424242" stroke-width="1.5"/><path d="M14.7,1.6 V7.5 H20.8" fill="none" stroke="#424242" stroke-width="1.4"/><circle cx="6.7" cy="17.2" r="2.6" fill="#EFEFEF" stroke="#424242" stroke-width="1.5"/><path d="M6.7,12 V14.5 M6.7,20 V22.5 M1.5,17.2 H4 M9.5,17.2 H12" stroke="#424242" stroke-width="1.5"/></svg>
<div class="t" id="t47" style="left:117px;top:907px;color:#1E1E1E;transform:scaleX(1.0018);">Directory.Build.props</div>
<svg class="a" style="left:27px;top:938px;" width="11" height="11" viewBox="0 0 11 11"><path d="M10.5,0.5 V10.5 H0.5 Z" fill="#1E1E1E"/></svg>
<svg class="a" style="left:59px;top:931px;" width="24" height="24" viewBox="0 0 24 24"><path d="M2.5,19 V4 Q2.5,3.5 3,3.5 H12.3 L13.5,6.5 H20 V12" fill="none" stroke="#DCB67A" stroke-width="1.6"/><path d="M2,19.6 L5.8,12.3 H22.6 L19.7,19.6 Z" fill="#DCB67A"/></svg>
<div class="t" id="t48" style="left:91px;top:935px;color:#1E1E1E;transform:scaleX(0.8905);">Tests</div>
<svg class="a" style="left:54px;top:964px;" width="9" height="14" viewBox="0 0 9 14"><path d="M1,1 L8,7 L1,13 Z" fill="none" stroke="#1E1E1E" stroke-width="1.5"/></svg>
<svg class="a" style="left:86px;top:959px;" width="24" height="24" viewBox="0 0 24 24"><rect x="1.8" y="1.8" width="20.4" height="2" fill="#424242"/><rect x="13.8" y="1.8" width="8.4" height="3.9" fill="#424242"/><path d="M2.3,3.5 V13.4 M21.6,3.5 V18.5 H17.2" fill="none" stroke="#424242" stroke-width="1.2"/><path d="M4.5,6.7 H11.6 M6.8,6.7 V10.5 L1.8,19.8 Q1.6,20.6 2.5,20.6 H14.6 Q15.5,20.6 15.2,19.8 L9.4,10.5 V6.7" fill="#F5F5F5" stroke="#2E8B2E" stroke-width="1.5"/><path d="M4.2,15 H12.7 L15.2,19.8 Q15.5,20.6 14.6,20.6 H2.5 Q1.6,20.6 1.8,19.8 Z" fill="#388A34"/></svg>
<div class="t" id="t49" style="left:117px;top:963px;color:#1E1E1E;transform:scaleX(0.9265);">NuGetPackage1.Test</div>
<svg class="a" style="left:86px;top:987px;" width="24" height="24" viewBox="0 0 24 24"><ellipse cx="10.5" cy="3.8" rx="2.2" ry="2.8" transform="rotate(25 10.5 3.8)" fill="#F5F5F5" stroke="#555" stroke-width="1.2"/><ellipse cx="18.8" cy="11.2" rx="3.3" ry="2.8" fill="#FFFFFF" stroke="#555" stroke-width="1.2"/><path d="M7.8,6.5 Q13,5.8 16.5,9.5 Q17.5,14 13.5,17.5 Q9,21 3.5,21.3 Q1.2,20.5 1.8,16.5 Q3,10 7.8,6.5 Z" fill="#FFFFFF" stroke="#555" stroke-width="1.2"/><path d="M4.8,11.5 Q8,10.5 10.5,12.3 Q12,13.5 15,12.5" fill="none" stroke="#666" stroke-width="1.3"/><circle cx="7" cy="12.5" r="1.3" fill="none" stroke="#777" stroke-width="0.9"/><circle cx="12" cy="13.5" r="1.3" fill="none" stroke="#777" stroke-width="0.9"/></svg>
<div class="t" id="t50" style="left:117px;top:991px;color:#1E1E1E;transform:scaleX(1.0309);">.editorconfig</div>
<svg class="a" style="left:86px;top:1015px;" width="24" height="24" viewBox="0 0 24 24"><path d="M4.9,10.3 V1.6 H14.7 L20.8,7.5 V22.4 H10" fill="#EFEFEF" stroke="#424242" stroke-width="1.5"/><path d="M14.7,1.6 V7.5 H20.8" fill="none" stroke="#424242" stroke-width="1.4"/><circle cx="6.7" cy="17.2" r="2.6" fill="#EFEFEF" stroke="#424242" stroke-width="1.5"/><path d="M6.7,12 V14.5 M6.7,20 V22.5 M1.5,17.2 H4 M9.5,17.2 H12" stroke="#424242" stroke-width="1.5"/></svg>
<div class="t" id="t51" style="left:117px;top:1019px;color:#1E1E1E;transform:scaleX(1.0018);">Directory.Build.props</div>
<div class="a" style="left:503px;top:765px;width:1706px;height:602px;background:#F5F5F5;box-sizing:border-box;border:2px solid #CCCEDB;"></div>
<div class="a" style="left:505px;top:767px;width:1702px;height:74px;background:#EEEEF2;"></div>
<div class="t" id="t52" style="left:511px;top:774px;color:#444444;transform:scaleX(0.9597);">Error List - Current Project (Source)</div>
<svg class="a" style="left:795.3px;top:779.2px;" width="1322" height="8" viewBox="0 0 1322 8"><g fill="#8A8A8A"><rect x="0" y="0" width="1.5" height="1.5"/><rect x="0" y="6" width="1.5" height="1.5"/><rect x="3" y="3" width="1.5" height="1.5"/><rect x="6" y="0" width="1.5" height="1.5"/><rect x="6" y="6" width="1.5" height="1.5"/><rect x="9" y="3" width="1.5" height="1.5"/><rect x="12" y="0" width="1.5" height="1.5"/><rect x="12" y="6" width="1.5" height="1.5"/><rect x="15" y="3" width="1.5" height="1.5"/><rect x="18" y="0" width="1.5" height="1.5"/><rect x="18" y="6" width="1.5" height="1.5"/><rect x="21" y="3" width="1.5" height="1.5"/><rect x="24" y="0" width="1.5" height="1.5"/><rect x="24" y="6" width="1.5" height="1.5"/><rect x="27" y="3" width="1.5" height="1.5"/><rect x="30" y="0" width="1.5" height="1.5"/><rect x="30" y="6" width="1.5" height="1.5"/><rect x="33" y="3" width="1.5" height="1.5"/><rect x="36" y="0" width="1.5" height="1.5"/><rect x="36" y="6" width="1.5" height="1.5"/><rect x="39" y="3" width="1.5" height="1.5"/><rect x="42" y="0" width="1.5" height="1.5"/><rect x="42" y="6" width="1.5" height="1.5"/><rect x="45" y="3" width="1.5" height="1.5"/><rect x="48" y="0" width="1.5" height="1.5"/><rect x="48" y="6" width="1.5" height="1.5"/><rect x="51" y="3" width="1.5" height="1.5"/><rect x="54" y="0" width="1.5" height="1.5"/><rect x="54" y="6" width="1.5" height="1.5"/><rect x="57" y="3" width="1.5" height="1.5"/><rect x="60" y="0" width="1.5" height="1.5"/><rect x="60" y="6" width="1.5" height="1.5"/><rect x="63" y="3" width="1.5" height="1.5"/><rect x="66" y="0" width="1.5" height="1.5"/><rect x="66" y="6" width="1.5" height="1.5"/><rect x="69" y="3" width="1.5" height="1.5"/><rect x="72" y="0" width="1.5" height="1.5"/><rect x="72" y="6" width="1.5" height="1.5"/><rect x="75" y="3" width="1.5" height="1.5"/><rect x="78" y="0" width="1.5" height="1.5"/><rect x="78" y="6" width="1.5" height="1.5"/><rect x="81" y="3" width="1.5" height="1.5"/><rect x="84" y="0" width="1.5" height="1.5"/><rect x="84" y="6" width="1.5" height="1.5"/><rect x="87" y="3" width="1.5" height="1.5"/><rect x="90" y="0" width="1.5" height="1.5"/><rect x="90" y="6" width="1.5" height="1.5"/><rect x="93" y="3" width="1.5" height="1.5"/><rect x="96" y="0" width="1.5" height="1.5"/><rect x="96" y="6" width="1.5" height="1.5"/><rect x="99" y="3" width="1.5" height="1.5"/><rect x="102" y="0" width="1.5" height="1.5"/><rect x="102" y="6" width="1.5" height="1.5"/><rect x="105" y="3" width="1.5" height="1.5"/><rect x="108" y="0" width="1.5" height="1.5"/><rect x="108" y="6" width="1.5" height="1.5"/><rect x="111" y="3" width="1.5" height="1.5"/><rect x="114" y="0" width="1.5" height="1.5"/><rect x="114" y="6" width="1.5" height="1.5"/><rect x="117" y="3" width="1.5" height="1.5"/><rect x="120" y="0" width="1.5" height="1.5"/><rect x="120" y="6" width="1.5" height="1.5"/><rect x="123" y="3" width="1.5" height="1.5"/><rect x="126" y="0" width="1.5" height="1.5"/><rect x="126" y="6" width="1.5" height="1.5"/><rect x="129" y="3" width="1.5" height="1.5"/><rect x="132" y="0" width="1.5" height="1.5"/><rect x="132" y="6" width="1.5" height="1.5"/><rect x="135" y="3" width="1.5" height="1.5"/><rect x="138" y="0" width="1.5" height="1.5"/><rect x="138" y="6" width="1.5" height="1.5"/><rect x="141" y="3" width="1.5" height="1.5"/><rect x="144" y="0" width="1.5" height="1.5"/><rect x="144" y="6" width="1.5" height="1.5"/><rect x="147" y="3" width="1.5" height="1.5"/><rect x="150" y="0" width="1.5" height="1.5"/><rect x="150" y="6" width="1.5" height="1.5"/><rect x="153" y="3" width="1.5" height="1.5"/><rect x="156" y="0" width="1.5" height="1.5"/><rect x="156" y="6" width="1.5" height="1.5"/><rect x="159" y="3" width="1.5" height="1.5"/><rect x="162" y="0" width="1.5" height="1.5"/><rect x="162" y="6" width="1.5" height="1.5"/><rect x="165" y="3" width="1.5" height="1.5"/><rect x="168" y="0" width="1.5" height="1.5"/><rect x="168" y="6" width="1.5" height="1.5"/><rect x="171" y="3" width="1.5" height="1.5"/><rect x="174" y="0" width="1.5" height="1.5"/><rect x="174" y="6" width="1.5" height="1.5"/><rect x="177" y="3" width="1.5" height="1.5"/><rect x="180" y="0" width="1.5" height="1.5"/><rect x="180" y="6" width="1.5" height="1.5"/><rect x="183" y="3" width="1.5" height="1.5"/><rect x="186" y="0" width="1.5" height="1.5"/><rect x="186" y="6" width="1.5" height="1.5"/><rect x="189" y="3" width="1.5" height="1.5"/><rect x="192" y="0" width="1.5" height="1.5"/><rect x="192" y="6" width="1.5" height="1.5"/><rect x="195" y="3" width="1.5" height="1.5"/><rect x="198" y="0" width="1.5" height="1.5"/><rect x="198" y="6" width="1.5" height="1.5"/><rect x="201" y="3" width="1.5" height="1.5"/><rect x="204" y="0" width="1.5" height="1.5"/><rect x="204" y="6" width="1.5" height="1.5"/><rect x="207" y="3" width="1.5" height="1.5"/><rect x="210" y="0" width="1.5" height="1.5"/><rect x="210" y="6" width="1.5" height="1.5"/><rect x="213" y="3" width="1.5" height="1.5"/><rect x="216" y="0" width="1.5" height="1.5"/><rect x="216" y="6" width="1.5" height="1.5"/><rect x="219" y="3" width="1.5" height="1.5"/><rect x="222" y="0" width="1.5" height="1.5"/><rect x="222" y="6" width="1.5" height="1.5"/><rect x="225" y="3" width="1.5" height="1.5"/><rect x="228" y="0" width="1.5" height="1.5"/><rect x="228" y="6" width="1.5" height="1.5"/><rect x="231" y="3" width="1.5" height="1.5"/><rect x="234" y="0" width="1.5" height="1.5"/><rect x="234" y="6" width="1.5" height="1.5"/><rect x="237" y="3" width="1.5" height="1.5"/><rect x="240" y="0" width="1.5" height="1.5"/><rect x="240" y="6" width="1.5" height="1.5"/><rect x="243" y="3" width="1.5" height="1.5"/><rect x="246" y="0" width="1.5" height="1.5"/><rect x="246" y="6" width="1.5" height="1.5"/><rect x="249" y="3" width="1.5" height="1.5"/><rect x="252" y="0" width="1.5" height="1.5"/><rect x="252" y="6" width="1.5" height="1.5"/><rect x="255" y="3" width="1.5" height="1.5"/><rect x="258" y="0" width="1.5" height="1.5"/><rect x="258" y="6" width="1.5" height="1.5"/><rect x="261" y="3" width="1.5" height="1.5"/><rect x="264" y="0" width="1.5" height="1.5"/><rect x="264" y="6" width="1.5" height="1.5"/><rect x="267" y="3" width="1.5" height="1.5"/><rect x="270" y="0" width="1.5" height="1.5"/><rect x="270" y="6" width="1.5" height="1.5"/><rect x="273" y="3" width="1.5" height="1.5"/><rect x="276" y="0" width="1.5" height="1.5"/><rect x="276" y="6" width="1.5" height="1.5"/><rect x="279" y="3" width="1.5" height="1.5"/><rect x="282" y="0" width="1.5" height="1.5"/><rect x="282" y="6" width="1.5" height="1.5"/><rect x="285" y="3" width="1.5" height="1.5"/><rect x="288" y="0" width="1.5" height="1.5"/><rect x="288" y="6" width="1.5" height="1.5"/><rect x="291" y="3" width="1.5" height="1.5"/><rect x="294" y="0" width="1.5" height="1.5"/><rect x="294" y="6" width="1.5" height="1.5"/><rect x="297" y="3" width="1.5" height="1.5"/><rect x="300" y="0" width="1.5" height="1.5"/><rect x="300" y="6" width="1.5" height="1.5"/><rect x="303" y="3" width="1.5" height="1.5"/><rect x="306" y="0" width="1.5" height="1.5"/><rect x="306" y="6" width="1.5" height="1.5"/><rect x="309" y="3" width="1.5" height="1.5"/><rect x="312" y="0" width="1.5" height="1.5"/><rect x="312" y="6" width="1.5" height="1.5"/><rect x="315" y="3" width="1.5" height="1.5"/><rect x="318" y="0" width="1.5" height="1.5"/><rect x="318" y="6" width="1.5" height="1.5"/><rect x="321" y="3" width="1.5" height="1.5"/><rect x="324" y="0" width="1.5" height="1.5"/><rect x="324" y="6" width="1.5" height="1.5"/><rect x="327" y="3" width="1.5" height="1.5"/><rect x="330" y="0" width="1.5" height="1.5"/><rect x="330" y="6" width="1.5" height="1.5"/><rect x="333" y="3" width="1.5" height="1.5"/><rect x="336" y="0" width="1.5" height="1.5"/><rect x="336" y="6" width="1.5" height="1.5"/><rect x="339" y="3" width="1.5" height="1.5"/><rect x="342" y="0" width="1.5" height="1.5"/><rect x="342" y="6" width="1.5" height="1.5"/><rect x="345" y="3" width="1.5" height="1.5"/><rect x="348" y="0" width="1.5" height="1.5"/><rect x="348" y="6" width="1.5" height="1.5"/><rect x="351" y="3" width="1.5" height="1.5"/><rect x="354" y="0" width="1.5" height="1.5"/><rect x="354" y="6" width="1.5" height="1.5"/><rect x="357" y="3" width="1.5" height="1.5"/><rect x="360" y="0" width="1.5" height="1.5"/><rect x="360" y="6" width="1.5" height="1.5"/><rect x="363" y="3" width="1.5" height="1.5"/><rect x="366" y="0" width="1.5" height="1.5"/><rect x="366" y="6" width="1.5" height="1.5"/><rect x="369" y="3" width="1.5" height="1.5"/><rect x="372" y="0" width="1.5" height="1.5"/><rect x="372" y="6" width="1.5" height="1.5"/><rect x="375" y="3" width="1.5" height="1.5"/><rect x="378" y="0" width="1.5" height="1.5"/><rect x="378" y="6" width="1.5" height="1.5"/><rect x="381" y="3" width="1.5" height="1.5"/><rect x="384" y="0" width="1.5" height="1.5"/><rect x="384" y="6" width="1.5" height="1.5"/><rect x="387" y="3" width="1.5" height="1.5"/><rect x="390" y="0" width="1.5" height="1.5"/><rect x="390" y="6" width="1.5" height="1.5"/><rect x="393" y="3" width="1.5" height="1.5"/><rect x="396" y="0" width="1.5" height="1.5"/><rect x="396" y="6" width="1.5" height="1.5"/><rect x="399" y="3" width="1.5" height="1.5"/><rect x="402" y="0" width="1.5" height="1.5"/><rect x="402" y="6" width="1.5" height="1.5"/><rect x="405" y="3" width="1.5" height="1.5"/><rect x="408" y="0" width="1.5" height="1.5"/><rect x="408" y="6" width="1.5" height="1.5"/><rect x="411" y="3" width="1.5" height="1.5"/><rect x="414" y="0" width="1.5" height="1.5"/><rect x="414" y="6" width="1.5" height="1.5"/><rect x="417" y="3" width="1.5" height="1.5"/><rect x="420" y="0" width="1.5" height="1.5"/><rect x="420" y="6" width="1.5" height="1.5"/><rect x="423" y="3" width="1.5" height="1.5"/><rect x="426" y="0" width="1.5" height="1.5"/><rect x="426" y="6" width="1.5" height="1.5"/><rect x="429" y="3" width="1.5" height="1.5"/><rect x="432" y="0" width="1.5" height="1.5"/><rect x="432" y="6" width="1.5" height="1.5"/><rect x="435" y="3" width="1.5" height="1.5"/><rect x="438" y="0" width="1.5" height="1.5"/><rect x="438" y="6" width="1.5" height="1.5"/><rect x="441" y="3" width="1.5" height="1.5"/><rect x="444" y="0" width="1.5" height="1.5"/><rect x="444" y="6" width="1.5" height="1.5"/><rect x="447" y="3" width="1.5" height="1.5"/><rect x="450" y="0" width="1.5" height="1.5"/><rect x="450" y="6" width="1.5" height="1.5"/><rect x="453" y="3" width="1.5" height="1.5"/><rect x="456" y="0" width="1.5" height="1.5"/><rect x="456" y="6" width="1.5" height="1.5"/><rect x="459" y="3" width="1.5" height="1.5"/><rect x="462" y="0" width="1.5" height="1.5"/><rect x="462" y="6" width="1.5" height="1.5"/><rect x="465" y="3" width="1.5" height="1.5"/><rect x="468" y="0" width="1.5" height="1.5"/><rect x="468" y="6" width="1.5" height="1.5"/><rect x="471" y="3" width="1.5" height="1.5"/><rect x="474" y="0" width="1.5" height="1.5"/><rect x="474" y="6" width="1.5" height="1.5"/><rect x="477" y="3" width="1.5" height="1.5"/><rect x="480" y="0" width="1.5" height="1.5"/><rect x="480" y="6" width="1.5" height="1.5"/><rect x="483" y="3" width="1.5" height="1.5"/><rect x="486" y="0" width="1.5" height="1.5"/><rect x="486" y="6" width="1.5" height="1.5"/><rect x="489" y="3" width="1.5" height="1.5"/><rect x="492" y="0" width="1.5" height="1.5"/><rect x="492" y="6" width="1.5" height="1.5"/><rect x="495" y="3" width="1.5" height="1.5"/><rect x="498" y="0" width="1.5" height="1.5"/><rect x="498" y="6" width="1.5" height="1.5"/><rect x="501" y="3" width="1.5" height="1.5"/><rect x="504" y="0" width="1.5" height="1.5"/><rect x="504" y="6" width="1.5" height="1.5"/><rect x="507" y="3" width="1.5" height="1.5"/><rect x="510" y="0" width="1.5" height="1.5"/><rect x="510" y="6" width="1.5" height="1.5"/><rect x="513" y="3" width="1.5" height="1.5"/><rect x="516" y="0" width="1.5" height="1.5"/><rect x="516" y="6" width="1.5" height="1.5"/><rect x="519" y="3" width="1.5" height="1.5"/><rect x="522" y="0" width="1.5" height="1.5"/><rect x="522" y="6" width="1.5" height="1.5"/><rect x="525" y="3" width="1.5" height="1.5"/><rect x="528" y="0" width="1.5" height="1.5"/><rect x="528" y="6" width="1.5" height="1.5"/><rect x="531" y="3" width="1.5" height="1.5"/><rect x="534" y="0" width="1.5" height="1.5"/><rect x="534" y="6" width="1.5" height="1.5"/><rect x="537" y="3" width="1.5" height="1.5"/><rect x="540" y="0" width="1.5" height="1.5"/><rect x="540" y="6" width="1.5" height="1.5"/><rect x="543" y="3" width="1.5" height="1.5"/><rect x="546" y="0" width="1.5" height="1.5"/><rect x="546" y="6" width="1.5" height="1.5"/><rect x="549" y="3" width="1.5" height="1.5"/><rect x="552" y="0" width="1.5" height="1.5"/><rect x="552" y="6" width="1.5" height="1.5"/><rect x="555" y="3" width="1.5" height="1.5"/><rect x="558" y="0" width="1.5" height="1.5"/><rect x="558" y="6" width="1.5" height="1.5"/><rect x="561" y="3" width="1.5" height="1.5"/><rect x="564" y="0" width="1.5" height="1.5"/><rect x="564" y="6" width="1.5" height="1.5"/><rect x="567" y="3" width="1.5" height="1.5"/><rect x="570" y="0" width="1.5" height="1.5"/><rect x="570" y="6" width="1.5" height="1.5"/><rect x="573" y="3" width="1.5" height="1.5"/><rect x="576" y="0" width="1.5" height="1.5"/><rect x="576" y="6" width="1.5" height="1.5"/><rect x="579" y="3" width="1.5" height="1.5"/><rect x="582" y="0" width="1.5" height="1.5"/><rect x="582" y="6" width="1.5" height="1.5"/><rect x="585" y="3" width="1.5" height="1.5"/><rect x="588" y="0" width="1.5" height="1.5"/><rect x="588" y="6" width="1.5" height="1.5"/><rect x="591" y="3" width="1.5" height="1.5"/><rect x="594" y="0" width="1.5" height="1.5"/><rect x="594" y="6" width="1.5" height="1.5"/><rect x="597" y="3" width="1.5" height="1.5"/><rect x="600" y="0" width="1.5" height="1.5"/><rect x="600" y="6" width="1.5" height="1.5"/><rect x="603" y="3" width="1.5" height="1.5"/><rect x="606" y="0" width="1.5" height="1.5"/><rect x="606" y="6" width="1.5" height="1.5"/><rect x="609" y="3" width="1.5" height="1.5"/><rect x="612" y="0" width="1.5" height="1.5"/><rect x="612" y="6" width="1.5" height="1.5"/><rect x="615" y="3" width="1.5" height="1.5"/><rect x="618" y="0" width="1.5" height="1.5"/><rect x="618" y="6" width="1.5" height="1.5"/><rect x="621" y="3" width="1.5" height="1.5"/><rect x="624" y="0" width="1.5" height="1.5"/><rect x="624" y="6" width="1.5" height="1.5"/><rect x="627" y="3" width="1.5" height="1.5"/><rect x="630" y="0" width="1.5" height="1.5"/><rect x="630" y="6" width="1.5" height="1.5"/><rect x="633" y="3" width="1.5" height="1.5"/><rect x="636" y="0" width="1.5" height="1.5"/><rect x="636" y="6" width="1.5" height="1.5"/><rect x="639" y="3" width="1.5" height="1.5"/><rect x="642" y="0" width="1.5" height="1.5"/><rect x="642" y="6" width="1.5" height="1.5"/><rect x="645" y="3" width="1.5" height="1.5"/><rect x="648" y="0" width="1.5" height="1.5"/><rect x="648" y="6" width="1.5" height="1.5"/><rect x="651" y="3" width="1.5" height="1.5"/><rect x="654" y="0" width="1.5" height="1.5"/><rect x="654" y="6" width="1.5" height="1.5"/><rect x="657" y="3" width="1.5" height="1.5"/><rect x="660" y="0" width="1.5" height="1.5"/><rect x="660" y="6" width="1.5" height="1.5"/><rect x="663" y="3" width="1.5" height="1.5"/><rect x="666" y="0" width="1.5" height="1.5"/><rect x="666" y="6" width="1.5" height="1.5"/><rect x="669" y="3" width="1.5" height="1.5"/><rect x="672" y="0" width="1.5" height="1.5"/><rect x="672" y="6" width="1.5" height="1.5"/><rect x="675" y="3" width="1.5" height="1.5"/><rect x="678" y="0" width="1.5" height="1.5"/><rect x="678" y="6" width="1.5" height="1.5"/><rect x="681" y="3" width="1.5" height="1.5"/><rect x="684" y="0" width="1.5" height="1.5"/><rect x="684" y="6" width="1.5" height="1.5"/><rect x="687" y="3" width="1.5" height="1.5"/><rect x="690" y="0" width="1.5" height="1.5"/><rect x="690" y="6" width="1.5" height="1.5"/><rect x="693" y="3" width="1.5" height="1.5"/><rect x="696" y="0" width="1.5" height="1.5"/><rect x="696" y="6" width="1.5" height="1.5"/><rect x="699" y="3" width="1.5" height="1.5"/><rect x="702" y="0" width="1.5" height="1.5"/><rect x="702" y="6" width="1.5" height="1.5"/><rect x="705" y="3" width="1.5" height="1.5"/><rect x="708" y="0" width="1.5" height="1.5"/><rect x="708" y="6" width="1.5" height="1.5"/><rect x="711" y="3" width="1.5" height="1.5"/><rect x="714" y="0" width="1.5" height="1.5"/><rect x="714" y="6" width="1.5" height="1.5"/><rect x="717" y="3" width="1.5" height="1.5"/><rect x="720" y="0" width="1.5" height="1.5"/><rect x="720" y="6" width="1.5" height="1.5"/><rect x="723" y="3" width="1.5" height="1.5"/><rect x="726" y="0" width="1.5" height="1.5"/><rect x="726" y="6" width="1.5" height="1.5"/><rect x="729" y="3" width="1.5" height="1.5"/><rect x="732" y="0" width="1.5" height="1.5"/><rect x="732" y="6" width="1.5" height="1.5"/><rect x="735" y="3" width="1.5" height="1.5"/><rect x="738" y="0" width="1.5" height="1.5"/><rect x="738" y="6" width="1.5" height="1.5"/><rect x="741" y="3" width="1.5" height="1.5"/><rect x="744" y="0" width="1.5" height="1.5"/><rect x="744" y="6" width="1.5" height="1.5"/><rect x="747" y="3" width="1.5" height="1.5"/><rect x="750" y="0" width="1.5" height="1.5"/><rect x="750" y="6" width="1.5" height="1.5"/><rect x="753" y="3" width="1.5" height="1.5"/><rect x="756" y="0" width="1.5" height="1.5"/><rect x="756" y="6" width="1.5" height="1.5"/><rect x="759" y="3" width="1.5" height="1.5"/><rect x="762" y="0" width="1.5" height="1.5"/><rect x="762" y="6" width="1.5" height="1.5"/><rect x="765" y="3" width="1.5" height="1.5"/><rect x="768" y="0" width="1.5" height="1.5"/><rect x="768" y="6" width="1.5" height="1.5"/><rect x="771" y="3" width="1.5" height="1.5"/><rect x="774" y="0" width="1.5" height="1.5"/><rect x="774" y="6" width="1.5" height="1.5"/><rect x="777" y="3" width="1.5" height="1.5"/><rect x="780" y="0" width="1.5" height="1.5"/><rect x="780" y="6" width="1.5" height="1.5"/><rect x="783" y="3" width="1.5" height="1.5"/><rect x="786" y="0" width="1.5" height="1.5"/><rect x="786" y="6" width="1.5" height="1.5"/><rect x="789" y="3" width="1.5" height="1.5"/><rect x="792" y="0" width="1.5" height="1.5"/><rect x="792" y="6" width="1.5" height="1.5"/><rect x="795" y="3" width="1.5" height="1.5"/><rect x="798" y="0" width="1.5" height="1.5"/><rect x="798" y="6" width="1.5" height="1.5"/><rect x="801" y="3" width="1.5" height="1.5"/><rect x="804" y="0" width="1.5" height="1.5"/><rect x="804" y="6" width="1.5" height="1.5"/><rect x="807" y="3" width="1.5" height="1.5"/><rect x="810" y="0" width="1.5" height="1.5"/><rect x="810" y="6" width="1.5" height="1.5"/><rect x="813" y="3" width="1.5" height="1.5"/><rect x="816" y="0" width="1.5" height="1.5"/><rect x="816" y="6" width="1.5" height="1.5"/><rect x="819" y="3" width="1.5" height="1.5"/><rect x="822" y="0" width="1.5" height="1.5"/><rect x="822" y="6" width="1.5" height="1.5"/><rect x="825" y="3" width="1.5" height="1.5"/><rect x="828" y="0" width="1.5" height="1.5"/><rect x="828" y="6" width="1.5" height="1.5"/><rect x="831" y="3" width="1.5" height="1.5"/><rect x="834" y="0" width="1.5" height="1.5"/><rect x="834" y="6" width="1.5" height="1.5"/><rect x="837" y="3" width="1.5" height="1.5"/><rect x="840" y="0" width="1.5" height="1.5"/><rect x="840" y="6" width="1.5" height="1.5"/><rect x="843" y="3" width="1.5" height="1.5"/><rect x="846" y="0" width="1.5" height="1.5"/><rect x="846" y="6" width="1.5" height="1.5"/><rect x="849" y="3" width="1.5" height="1.5"/><rect x="852" y="0" width="1.5" height="1.5"/><rect x="852" y="6" width="1.5" height="1.5"/><rect x="855" y="3" width="1.5" height="1.5"/><rect x="858" y="0" width="1.5" height="1.5"/><rect x="858" y="6" width="1.5" height="1.5"/><rect x="861" y="3" width="1.5" height="1.5"/><rect x="864" y="0" width="1.5" height="1.5"/><rect x="864" y="6" width="1.5" height="1.5"/><rect x="867" y="3" width="1.5" height="1.5"/><rect x="870" y="0" width="1.5" height="1.5"/><rect x="870" y="6" width="1.5" height="1.5"/><rect x="873" y="3" width="1.5" height="1.5"/><rect x="876" y="0" width="1.5" height="1.5"/><rect x="876" y="6" width="1.5" height="1.5"/><rect x="879" y="3" width="1.5" height="1.5"/><rect x="882" y="0" width="1.5" height="1.5"/><rect x="882" y="6" width="1.5" height="1.5"/><rect x="885" y="3" width="1.5" height="1.5"/><rect x="888" y="0" width="1.5" height="1.5"/><rect x="888" y="6" width="1.5" height="1.5"/><rect x="891" y="3" width="1.5" height="1.5"/><rect x="894" y="0" width="1.5" height="1.5"/><rect x="894" y="6" width="1.5" height="1.5"/><rect x="897" y="3" width="1.5" height="1.5"/><rect x="900" y="0" width="1.5" height="1.5"/><rect x="900" y="6" width="1.5" height="1.5"/><rect x="903" y="3" width="1.5" height="1.5"/><rect x="906" y="0" width="1.5" height="1.5"/><rect x="906" y="6" width="1.5" height="1.5"/><rect x="909" y="3" width="1.5" height="1.5"/><rect x="912" y="0" width="1.5" height="1.5"/><rect x="912" y="6" width="1.5" height="1.5"/><rect x="915" y="3" width="1.5" height="1.5"/><rect x="918" y="0" width="1.5" height="1.5"/><rect x="918" y="6" width="1.5" height="1.5"/><rect x="921" y="3" width="1.5" height="1.5"/><rect x="924" y="0" width="1.5" height="1.5"/><rect x="924" y="6" width="1.5" height="1.5"/><rect x="927" y="3" width="1.5" height="1.5"/><rect x="930" y="0" width="1.5" height="1.5"/><rect x="930" y="6" width="1.5" height="1.5"/><rect x="933" y="3" width="1.5" height="1.5"/><rect x="936" y="0" width="1.5" height="1.5"/><rect x="936" y="6" width="1.5" height="1.5"/><rect x="939" y="3" width="1.5" height="1.5"/><rect x="942" y="0" width="1.5" height="1.5"/><rect x="942" y="6" width="1.5" height="1.5"/><rect x="945" y="3" width="1.5" height="1.5"/><rect x="948" y="0" width="1.5" height="1.5"/><rect x="948" y="6" width="1.5" height="1.5"/><rect x="951" y="3" width="1.5" height="1.5"/><rect x="954" y="0" width="1.5" height="1.5"/><rect x="954" y="6" width="1.5" height="1.5"/><rect x="957" y="3" width="1.5" height="1.5"/><rect x="960" y="0" width="1.5" height="1.5"/><rect x="960" y="6" width="1.5" height="1.5"/><rect x="963" y="3" width="1.5" height="1.5"/><rect x="966" y="0" width="1.5" height="1.5"/><rect x="966" y="6" width="1.5" height="1.5"/><rect x="969" y="3" width="1.5" height="1.5"/><rect x="972" y="0" width="1.5" height="1.5"/><rect x="972" y="6" width="1.5" height="1.5"/><rect x="975" y="3" width="1.5" height="1.5"/><rect x="978" y="0" width="1.5" height="1.5"/><rect x="978" y="6" width="1.5" height="1.5"/><rect x="981" y="3" width="1.5" height="1.5"/><rect x="984" y="0" width="1.5" height="1.5"/><rect x="984" y="6" width="1.5" height="1.5"/><rect x="987" y="3" width="1.5" height="1.5"/><rect x="990" y="0" width="1.5" height="1.5"/><rect x="990" y="6" width="1.5" height="1.5"/><rect x="993" y="3" width="1.5" height="1.5"/><rect x="996" y="0" width="1.5" height="1.5"/><rect x="996" y="6" width="1.5" height="1.5"/><rect x="999" y="3" width="1.5" height="1.5"/><rect x="1002" y="0" width="1.5" height="1.5"/><rect x="1002" y="6" width="1.5" height="1.5"/><rect x="1005" y="3" width="1.5" height="1.5"/><rect x="1008" y="0" width="1.5" height="1.5"/><rect x="1008" y="6" width="1.5" height="1.5"/><rect x="1011" y="3" width="1.5" height="1.5"/><rect x="1014" y="0" width="1.5" height="1.5"/><rect x="1014" y="6" width="1.5" height="1.5"/><rect x="1017" y="3" width="1.5" height="1.5"/><rect x="1020" y="0" width="1.5" height="1.5"/><rect x="1020" y="6" width="1.5" height="1.5"/><rect x="1023" y="3" width="1.5" height="1.5"/><rect x="1026" y="0" width="1.5" height="1.5"/><rect x="1026" y="6" width="1.5" height="1.5"/><rect x="1029" y="3" width="1.5" height="1.5"/><rect x="1032" y="0" width="1.5" height="1.5"/><rect x="1032" y="6" width="1.5" height="1.5"/><rect x="1035" y="3" width="1.5" height="1.5"/><rect x="1038" y="0" width="1.5" height="1.5"/><rect x="1038" y="6" width="1.5" height="1.5"/><rect x="1041" y="3" width="1.5" height="1.5"/><rect x="1044" y="0" width="1.5" height="1.5"/><rect x="1044" y="6" width="1.5" height="1.5"/><rect x="1047" y="3" width="1.5" height="1.5"/><rect x="1050" y="0" width="1.5" height="1.5"/><rect x="1050" y="6" width="1.5" height="1.5"/><rect x="1053" y="3" width="1.5" height="1.5"/><rect x="1056" y="0" width="1.5" height="1.5"/><rect x="1056" y="6" width="1.5" height="1.5"/><rect x="1059" y="3" width="1.5" height="1.5"/><rect x="1062" y="0" width="1.5" height="1.5"/><rect x="1062" y="6" width="1.5" height="1.5"/><rect x="1065" y="3" width="1.5" height="1.5"/><rect x="1068" y="0" width="1.5" height="1.5"/><rect x="1068" y="6" width="1.5" height="1.5"/><rect x="1071" y="3" width="1.5" height="1.5"/><rect x="1074" y="0" width="1.5" height="1.5"/><rect x="1074" y="6" width="1.5" height="1.5"/><rect x="1077" y="3" width="1.5" height="1.5"/><rect x="1080" y="0" width="1.5" height="1.5"/><rect x="1080" y="6" width="1.5" height="1.5"/><rect x="1083" y="3" width="1.5" height="1.5"/><rect x="1086" y="0" width="1.5" height="1.5"/><rect x="1086" y="6" width="1.5" height="1.5"/><rect x="1089" y="3" width="1.5" height="1.5"/><rect x="1092" y="0" width="1.5" height="1.5"/><rect x="1092" y="6" width="1.5" height="1.5"/><rect x="1095" y="3" width="1.5" height="1.5"/><rect x="1098" y="0" width="1.5" height="1.5"/><rect x="1098" y="6" width="1.5" height="1.5"/><rect x="1101" y="3" width="1.5" height="1.5"/><rect x="1104" y="0" width="1.5" height="1.5"/><rect x="1104" y="6" width="1.5" height="1.5"/><rect x="1107" y="3" width="1.5" height="1.5"/><rect x="1110" y="0" width="1.5" height="1.5"/><rect x="1110" y="6" width="1.5" height="1.5"/><rect x="1113" y="3" width="1.5" height="1.5"/><rect x="1116" y="0" width="1.5" height="1.5"/><rect x="1116" y="6" width="1.5" height="1.5"/><rect x="1119" y="3" width="1.5" height="1.5"/><rect x="1122" y="0" width="1.5" height="1.5"/><rect x="1122" y="6" width="1.5" height="1.5"/><rect x="1125" y="3" width="1.5" height="1.5"/><rect x="1128" y="0" width="1.5" height="1.5"/><rect x="1128" y="6" width="1.5" height="1.5"/><rect x="1131" y="3" width="1.5" height="1.5"/><rect x="1134" y="0" width="1.5" height="1.5"/><rect x="1134" y="6" width="1.5" height="1.5"/><rect x="1137" y="3" width="1.5" height="1.5"/><rect x="1140" y="0" width="1.5" height="1.5"/><rect x="1140" y="6" width="1.5" height="1.5"/><rect x="1143" y="3" width="1.5" height="1.5"/><rect x="1146" y="0" width="1.5" height="1.5"/><rect x="1146" y="6" width="1.5" height="1.5"/><rect x="1149" y="3" width="1.5" height="1.5"/><rect x="1152" y="0" width="1.5" height="1.5"/><rect x="1152" y="6" width="1.5" height="1.5"/><rect x="1155" y="3" width="1.5" height="1.5"/><rect x="1158" y="0" width="1.5" height="1.5"/><rect x="1158" y="6" width="1.5" height="1.5"/><rect x="1161" y="3" width="1.5" height="1.5"/><rect x="1164" y="0" width="1.5" height="1.5"/><rect x="1164" y="6" width="1.5" height="1.5"/><rect x="1167" y="3" width="1.5" height="1.5"/><rect x="1170" y="0" width="1.5" height="1.5"/><rect x="1170" y="6" width="1.5" height="1.5"/><rect x="1173" y="3" width="1.5" height="1.5"/><rect x="1176" y="0" width="1.5" height="1.5"/><rect x="1176" y="6" width="1.5" height="1.5"/><rect x="1179" y="3" width="1.5" height="1.5"/><rect x="1182" y="0" width="1.5" height="1.5"/><rect x="1182" y="6" width="1.5" height="1.5"/><rect x="1185" y="3" width="1.5" height="1.5"/><rect x="1188" y="0" width="1.5" height="1.5"/><rect x="1188" y="6" width="1.5" height="1.5"/><rect x="1191" y="3" width="1.5" height="1.5"/><rect x="1194" y="0" width="1.5" height="1.5"/><rect x="1194" y="6" width="1.5" height="1.5"/><rect x="1197" y="3" width="1.5" height="1.5"/><rect x="1200" y="0" width="1.5" height="1.5"/><rect x="1200" y="6" width="1.5" height="1.5"/><rect x="1203" y="3" width="1.5" height="1.5"/><rect x="1206" y="0" width="1.5" height="1.5"/><rect x="1206" y="6" width="1.5" height="1.5"/><rect x="1209" y="3" width="1.5" height="1.5"/><rect x="1212" y="0" width="1.5" height="1.5"/><rect x="1212" y="6" width="1.5" height="1.5"/><rect x="1215" y="3" width="1.5" height="1.5"/><rect x="1218" y="0" width="1.5" height="1.5"/><rect x="1218" y="6" width="1.5" height="1.5"/><rect x="1221" y="3" width="1.5" height="1.5"/><rect x="1224" y="0" width="1.5" height="1.5"/><rect x="1224" y="6" width="1.5" height="1.5"/><rect x="1227" y="3" width="1.5" height="1.5"/><rect x="1230" y="0" width="1.5" height="1.5"/><rect x="1230" y="6" width="1.5" height="1.5"/><rect x="1233" y="3" width="1.5" height="1.5"/><rect x="1236" y="0" width="1.5" height="1.5"/><rect x="1236" y="6" width="1.5" height="1.5"/><rect x="1239" y="3" width="1.5" height="1.5"/><rect x="1242" y="0" width="1.5" height="1.5"/><rect x="1242" y="6" width="1.5" height="1.5"/><rect x="1245" y="3" width="1.5" height="1.5"/><rect x="1248" y="0" width="1.5" height="1.5"/><rect x="1248" y="6" width="1.5" height="1.5"/><rect x="1251" y="3" width="1.5" height="1.5"/><rect x="1254" y="0" width="1.5" height="1.5"/><rect x="1254" y="6" width="1.5" height="1.5"/><rect x="1257" y="3" width="1.5" height="1.5"/><rect x="1260" y="0" width="1.5" height="1.5"/><rect x="1260" y="6" width="1.5" height="1.5"/><rect x="1263" y="3" width="1.5" height="1.5"/><rect x="1266" y="0" width="1.5" height="1.5"/><rect x="1266" y="6" width="1.5" height="1.5"/><rect x="1269" y="3" width="1.5" height="1.5"/><rect x="1272" y="0" width="1.5" height="1.5"/><rect x="1272" y="6" width="1.5" height="1.5"/><rect x="1275" y="3" width="1.5" height="1.5"/><rect x="1278" y="0" width="1.5" height="1.5"/><rect x="1278" y="6" width="1.5" height="1.5"/><rect x="1281" y="3" width="1.5" height="1.5"/><rect x="1284" y="0" width="1.5" height="1.5"/><rect x="1284" y="6" width="1.5" height="1.5"/><rect x="1287" y="3" width="1.5" height="1.5"/><rect x="1290" y="0" width="1.5" height="1.5"/><rect x="1290" y="6" width="1.5" height="1.5"/><rect x="1293" y="3" width="1.5" height="1.5"/><rect x="1296" y="0" width="1.5" height="1.5"/><rect x="1296" y="6" width="1.5" height="1.5"/><rect x="1299" y="3" width="1.5" height="1.5"/><rect x="1302" y="0" width="1.5" height="1.5"/><rect x="1302" y="6" width="1.5" height="1.5"/><rect x="1305" y="3" width="1.5" height="1.5"/><rect x="1308" y="0" width="1.5" height="1.5"/><rect x="1308" y="6" width="1.5" height="1.5"/><rect x="1311" y="3" width="1.5" height="1.5"/><rect x="1314" y="0" width="1.5" height="1.5"/><rect x="1314" y="6" width="1.5" height="1.5"/><rect x="1317" y="3" width="1.5" height="1.5"/><rect x="1320" y="0" width="1.5" height="1.5"/><rect x="1320" y="6" width="1.5" height="1.5"/></g></svg>
<svg class="a" style="left:2128px;top:780px;" width="12" height="7" viewBox="0 0 12 7"><path d="M0,0 H12 L6,6.5 Z" fill="#1E1E1E"/></svg>
<svg class="a" style="left:2157px;top:774px;" width="11" height="18" viewBox="0 0 11 18"><rect x="1.9" y="1.9" width="6" height="9" fill="none" stroke="#1E1E1E" stroke-width="2.2"/><rect x="0.1" y="10" width="10.1" height="1.6" fill="#1E1E1E"/><rect x="4.7" y="11" width="1.7" height="6" fill="#1E1E1E"/></svg>
<svg class="a" style="left:2181px;top:776px;" width="15" height="12" viewBox="0 0 15 12"><path d="M0.8,0.5 L14.2,11.5 M14.2,0.5 L0.8,11.5" stroke="#1E1E1E" stroke-width="2.3"/></svg>
<div class="a" style="left:515px;top:805px;width:225px;height:31px;background:#FFFFFF;box-sizing:border-box;border:2px solid #CCCEDB;"></div>
<div class="t" id="t53" style="left:520px;top:812px;transform:scaleX(0.9752);">Current Project</div>
<svg class="a" style="left:723.5px;top:819px;" width="9" height="5" viewBox="0 0 9 5"><path d="M0,0 H9 L4.5,5 Z" fill="#717171"/></svg>
<div class="a" style="left:750px;top:806px;width:2px;height:28px;background:#CCCEDB;"></div>
<div class="a" style="left:758px;top:803px;width:109px;height:34px;box-sizing:border-box;border:2px solid #3399FF;"></div>
<svg class="a" style="left:764px;top:809px;" width="22" height="22" viewBox="0 0 22 22"><circle cx="11" cy="11" r="10.7" fill="#E51400"/><path d="M6.5,6.5 L15.5,15.5 M15.5,6.5 L6.5,15.5" stroke="#FFFFFF" stroke-width="3"/></svg>
<div class="t" id="t54" style="left:793px;top:811px;transform:scaleX(0.9437);">0 Errors</div>
<div class="a" style="left:872px;top:806px;width:2px;height:28px;background:#CCCEDB;"></div>
<div class="a" style="left:880px;top:803px;width:137px;height:34px;box-sizing:border-box;border:2px solid #3399FF;"></div>
<svg class="a" style="left:886px;top:809px;" width="22" height="22" viewBox="0 0 22 22"><path d="M11,1 L21,20.8 Q21.3,21.8 20.3,21.8 H1.7 Q0.7,21.8 1,20.8 Z" fill="#FFCC00"/><rect x="9.6" y="6.8" width="2.8" height="10" rx="1.2" fill="#1E1E1E"/><circle cx="11" cy="19.2" r="1.5" fill="#1E1E1E"/></svg>
<div class="t" id="t55" style="left:914px;top:811px;transform:scaleX(0.9967);">0 Warnings</div>
<div class="a" style="left:1022px;top:806px;width:2px;height:28px;background:#CCCEDB;"></div>
<svg class="a" style="left:1036px;top:809px;" width="22" height="22" viewBox="0 0 22 22"><circle cx="11" cy="11" r="10.8" fill="#1BA1E2"/><rect x="9.6" y="8" width="2.8" height="11" fill="#FFFFFF"/><rect x="9.6" y="3.3" width="2.8" height="2.8" fill="#FFFFFF"/></svg>
<div class="t" id="t56" style="left:1065px;top:811px;transform:scaleX(0.9515);">0 Messages</div>
<div class="a" style="left:1176px;top:806px;width:2px;height:28px;background:#CCCEDB;"></div>
<div class="a" style="left:1183px;top:803px;width:35px;height:34px;box-sizing:border-box;border:2px solid #3399FF;"></div>
<svg class="a" style="left:1189px;top:809px;" width="24" height="23" viewBox="0 0 24 23"><path d="M2.5,1.5 L11.5,10.5 M11.5,1.5 L2.5,10.5" stroke="#9A4A14" stroke-width="2.8"/><path d="M13,8 H22 L16.5,15 V21.5 H13.5 V15.5 L11.5,13 Z" fill="#424242"/></svg>
<div class="a" style="left:1223px;top:806px;width:2px;height:28px;background:#CCCEDB;"></div>
<div class="a" style="left:1235px;top:805px;width:225px;height:31px;background:#FFFFFF;box-sizing:border-box;border:2px solid #CCCEDB;"></div>
<div class="t" id="t57" style="left:1241px;top:812px;transform:scaleX(0.9725);">Build + IntelliSense</div>
<svg class="a" style="left:1444px;top:819px;" width="9" height="5" viewBox="0 0 9 5"><path d="M0,0 H9 L4.5,5 Z" fill="#717171"/></svg>
<div class="a" style="left:1907px;top:803px;width:299px;height:33px;background:#FFFFFF;box-sizing:border-box;border:2px solid #CCCEDB;"></div>
<div class="t" id="t58" style="left:1915px;top:810px;color:#6D6D6D;transform:scaleX(0.9319);">Search Error List</div>
<svg class="a" style="left:2164px;top:809px;" width="20" height="19" viewBox="0 0 20 19"><circle cx="12.5" cy="7" r="5" fill="none" stroke="#6E6E6E" stroke-width="2.6"/><path d="M9.2,10.3 L2.5,17" stroke="#6E6E6E" stroke-width="3.6"/></svg>
<svg class="a" style="left:2191.5px;top:815px;" width="9" height="5" viewBox="0 0 9 5"><path d="M0,0 H9 L4.5,5 Z" fill="#717171"/></svg>
<div class="a" style="left:545px;top:842px;width:1.6px;height:32px;background:#CCCEDB;"></div>
<div class="a" style="left:584px;top:842px;width:1.6px;height:32px;background:#CCCEDB;"></div>
<div class="a" style="left:659.5px;top:842px;width:1.6px;height:32px;background:#CCCEDB;"></div>
<div class="a" style="left:1709.5px;top:842px;width:1.6px;height:32px;background:#CCCEDB;"></div>
<div class="a" style="left:1859.5px;top:842px;width:1.6px;height:32px;background:#CCCEDB;"></div>
<div class="a" style="left:2009.5px;top:842px;width:1.6px;height:32px;background:#CCCEDB;"></div>
<div class="a" style="left:2062px;top:842px;width:1.6px;height:32px;background:#CCCEDB;"></div>
<div class="a" style="left:2168.3px;top:842px;width:1.6px;height:32px;background:#CCCEDB;"></div>
<div class="a" style="left:2203.3px;top:842px;width:1.6px;height:32px;background:#CCCEDB;"></div>
<div class="a" style="left:508px;top:872.8px;width:1697px;height:1.4px;background:#CCCEDB;"></div>
<svg class="a" style="left:570px;top:845px;" width="10" height="9" viewBox="0 0 10 9"><g fill="#717171"><rect x="0" y="0" width="1.5" height="1.5"/><rect x="3" y="0" width="1.5" height="1.5"/><rect x="6" y="0" width="1.5" height="1.5"/><rect x="3" y="3" width="1.5" height="1.5"/><rect x="6" y="3" width="1.5" height="1.5"/><rect x="6" y="6" width="1.5" height="1.5"/></g></svg>
<div class="t" id="t59" style="left:590px;top:849px;transform:scaleX(1.0071);">Code</div>
<div class="t" id="t60" style="left:666px;top:849px;transform:scaleX(1.0034);">Description</div>
<div class="t" id="t61" style="left:1716px;top:849px;transform:scaleX(0.9589);">Project</div>
<div class="t" id="t62" style="left:1866px;top:849px;transform:scaleX(0.9179);">File</div>
<div class="t" id="t63" style="left:2016px;top:849px;transform:scaleX(0.9152);">Line</div>
<div class="t" id="t64" style="left:2068px;top:849px;transform:scaleX(0.9578);">Suppress...</div>
<div class="a" style="left:9px;top:1365px;width:104px;height:33px;background:#F5F5F5;box-sizing:border-box;border:2px solid #CCCEDB;border-top:none;"></div>
<div class="t" id="t65" style="left:19px;top:1373px;color:#0E70C0;transform:scaleX(0.9962);">Solution...</div>
<div class="t" id="t66" style="left:122px;top:1373px;color:#444444;transform:scaleX(0.9447);">Git Chan...</div>
<div class="t" id="t67" style="left:225px;top:1373px;color:#444444;transform:scaleX(1.0145);">GitHub</div>
<div class="t" id="t68" style="left:301px;top:1373px;color:#444444;transform:scaleX(0.9634);">Properties</div>
<div class="t" id="t69" style="left:399px;top:1373px;color:#444444;transform:scaleX(0.9762);">Find and...</div>
<div class="t" id="t70" style="left:513px;top:1373px;color:#444444;transform:scaleX(0.9705);">Exception Settings</div>
<div class="t" id="t71" style="left:676px;top:1373px;color:#444444;transform:scaleX(1.0741);">Output</div>
<div class="a" style="left:743px;top:1365px;width:88px;height:33px;background:#F5F5F5;box-sizing:border-box;border:2px solid #CCCEDB;border-top:none;"></div>
<div class="t" id="t72" style="left:753px;top:1373px;color:#0E70C0;transform:scaleX(0.9315);">Error List</div>
<div class="t" id="t73" style="left:840px;top:1373px;color:#444444;transform:scaleX(0.9555);">Code Coverage Results</div>
<div class="t" id="t74" style="left:1041px;top:1373px;color:#444444;transform:scaleX(0.9732);">C# Interactive (.NET Framework 64-bit)</div>
<div class="a" style="left:2247px;top:111px;width:9px;height:99px;background:#CCCEDB;"></div>
<div class="a" style="left:2247px;top:229px;width:9px;height:126px;background:#CCCEDB;"></div>
<div class="t" style="left:2238.5px;top:110px;color:#444444;transform:rotate(90deg) scaleX(.967);transform-origin:0 0;">Test Explorer</div>
<div class="t" style="left:2238.5px;top:228px;color:#444444;transform:rotate(90deg) scaleX(.967);transform-origin:0 0;">Live Unit Testing</div>
<div class="a" style="left:0px;top:1407px;width:2256px;height:37px;background:#007ACC;"></div>
<svg class="a" style="left:6px;top:1419px;" width="24" height="16" viewBox="0 0 24 16"><path d="M5,1 H23 L19,15 H1 Z" fill="none" stroke="#FFFFFF" stroke-width="1.6"/></svg>
<div class="t" id="t75" style="left:42px;top:1417px;color:#FFFFFF;transform:scaleX(0.9231);">Ready</div>
<svg class="a" style="left:2197px;top:1414px;" width="22" height="24" viewBox="0 0 22 24"><g transform="rotate(22 11 12)"><path d="M11,1.5 Q16,1.5 16.5,8 L17,14.5 L19.5,18.5 H2.5 L5,14.5 L5.5,8 Q6,1.5 11,1.5 Z" fill="#DADADA"/><path d="M9,20 H13 Q13,22.5 11,22.5 Q9,22.5 9,20 Z" fill="#DADADA"/></g></svg>
<svg class="a" style="left:2211px;top:1423px;" width="19" height="19" viewBox="0 0 19 19"><circle cx="9.5" cy="9.5" r="8.6" fill="#E51400"/><path d="M7.6,5.2 L10.3,3.6 V15" fill="none" stroke="#FFF3C8" stroke-width="1.9"/></svg>
<div class="a" style="left:0px;top:1444px;width:2256px;height:11px;background:#EEEEEE;"></div>
<div class="a" style="left:1439px;top:1444px;width:186px;height:11px;background:#F4F4F4;"></div>
<div class="a" style="left:2248px;top:1444px;width:1.5px;height:11px;background:#B8B8B8;"></div>
<div class="a" style="left:2102px;top:1453px;width:2px;height:2px;background:#222"></div>
<div class="a" style="left:2110px;top:1453px;width:10px;height:2px;background:#222"></div>
<div class="a" style="left:2127px;top:1453px;width:2px;height:2px;background:#222"></div>
<div class="a" style="left:2131px;top:1453px;width:9px;height:2px;background:#222"></div>
</body></html>
